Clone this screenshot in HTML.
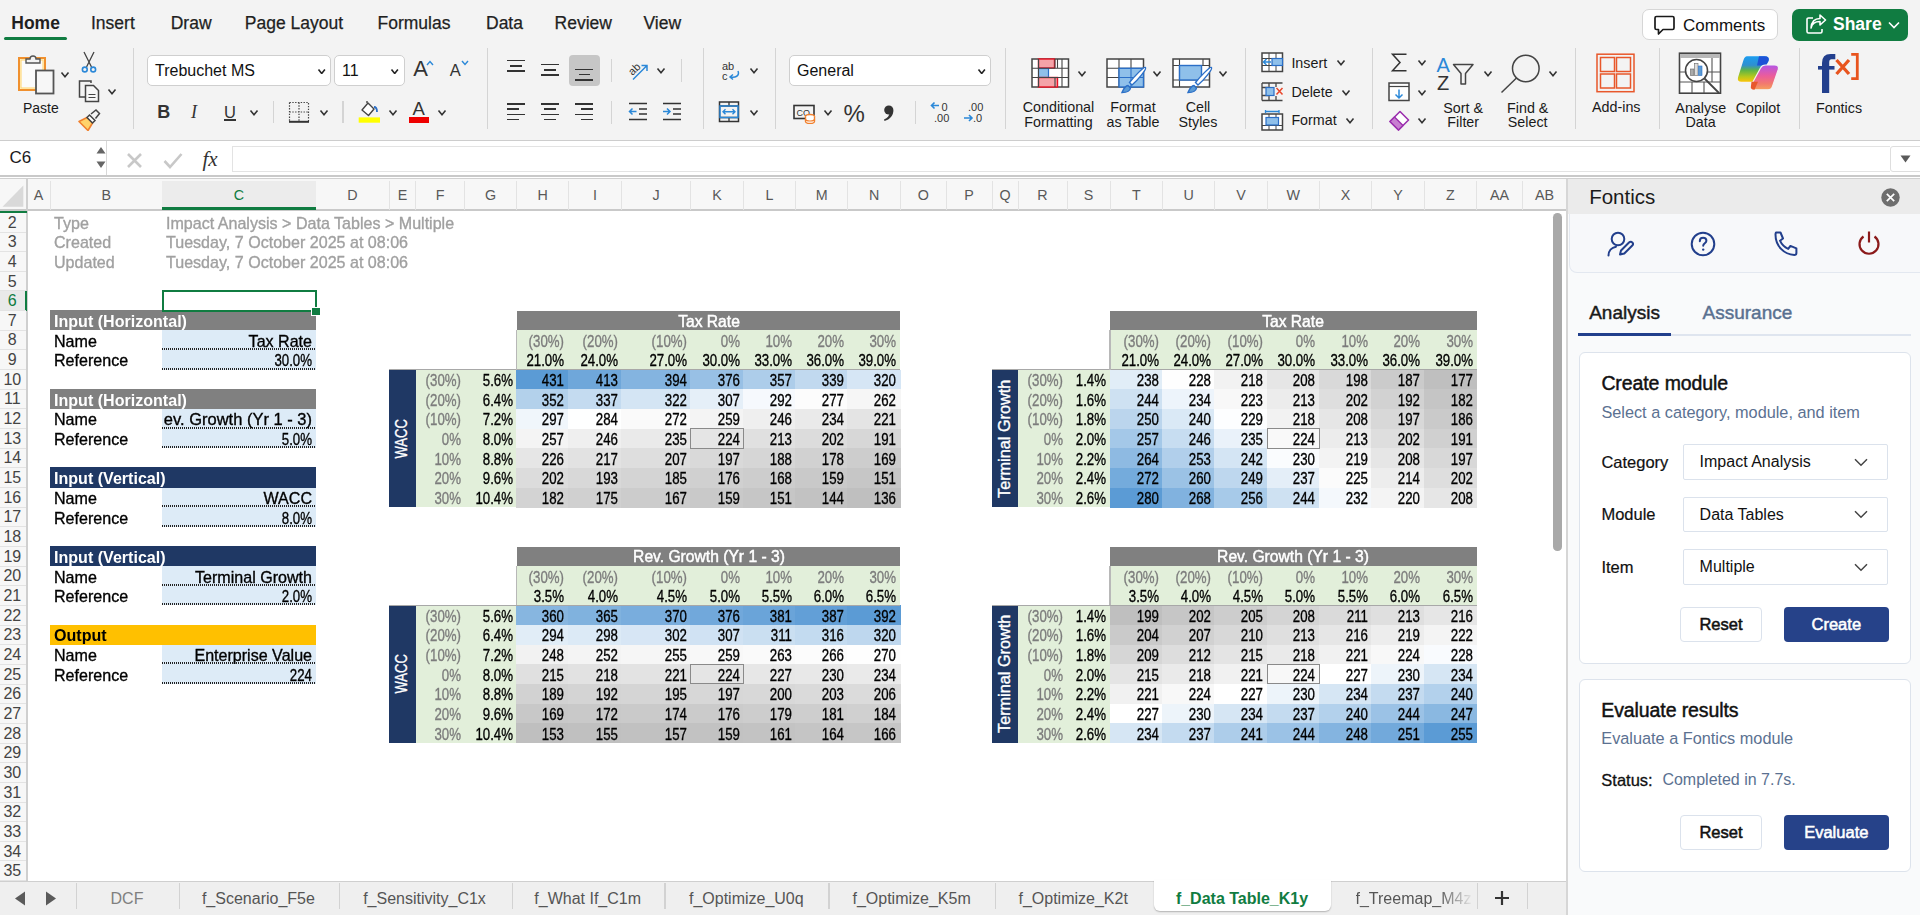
<!DOCTYPE html>
<html><head><meta charset="utf-8"><style>
html,body{margin:0;padding:0;width:1920px;height:915px;overflow:hidden;background:#fff;}
body{position:relative;font-family:"Liberation Sans", sans-serif;}
body>div,body>svg{position:absolute;}
.t{white-space:nowrap;}
</style></head><body>
<div style="left:0.00px;top:0.00px;width:1920.00px;height:140.00px;background:#f3f3f3"></div>
<div class="t" style="top:14.99px;font-size:17.5px;line-height:17.5px;color:#1f1f1f;font-weight:600;left:11.30px;">Home</div>
<div class="t" style="top:14.99px;font-size:17.5px;line-height:17.5px;color:#1f1f1f;font-weight:400;left:91.00px;-webkit-text-stroke-width:0.25px;">Insert</div>
<div class="t" style="top:14.99px;font-size:17.5px;line-height:17.5px;color:#1f1f1f;font-weight:400;left:170.70px;-webkit-text-stroke-width:0.25px;">Draw</div>
<div class="t" style="top:14.99px;font-size:17.5px;line-height:17.5px;color:#1f1f1f;font-weight:400;left:244.80px;-webkit-text-stroke-width:0.25px;">Page Layout</div>
<div class="t" style="top:14.99px;font-size:17.5px;line-height:17.5px;color:#1f1f1f;font-weight:400;left:377.50px;-webkit-text-stroke-width:0.25px;">Formulas</div>
<div class="t" style="top:14.99px;font-size:17.5px;line-height:17.5px;color:#1f1f1f;font-weight:400;left:486.00px;-webkit-text-stroke-width:0.25px;">Data</div>
<div class="t" style="top:14.99px;font-size:17.5px;line-height:17.5px;color:#1f1f1f;font-weight:400;left:554.60px;-webkit-text-stroke-width:0.25px;">Review</div>
<div class="t" style="top:14.99px;font-size:17.5px;line-height:17.5px;color:#1f1f1f;font-weight:400;left:643.50px;-webkit-text-stroke-width:0.25px;">View</div>
<div style="left:4.00px;top:36.50px;width:62.60px;height:3.50px;background:#107c41;border-radius:2px"></div>
<div style="left:1641.80px;top:9.40px;width:135.90px;height:30.20px;background:#fff;border:1px solid #d6d6d6;border-radius:7px;box-sizing:border-box"></div>
<svg style="left:1654px;top:15px" width="22" height="21" viewBox="0 0 22 21"><path d="M2.5 1.5h16a1.5 1.5 0 0 1 1.5 1.5v10a1.5 1.5 0 0 1-1.5 1.5H9l-4.5 4.5v-4.5h-2A1.5 1.5 0 0 1 1 13V3a1.5 1.5 0 0 1 1.5-1.5z" fill="none" stroke="#1a1a1a" stroke-width="1.7" stroke-linejoin="round"/></svg>
<div class="t" style="top:16.61px;font-size:17px;line-height:17px;color:#111;font-weight:400;left:1683.00px;">Comments</div>
<div style="left:1792.00px;top:9.00px;width:116.00px;height:31.50px;background:#107c41;border-radius:7px"></div>
<svg style="left:1805px;top:14px" width="22" height="21" viewBox="0 0 22 21"><path d="M8 4H3.5A1.5 1.5 0 0 0 2 5.5v12A1.5 1.5 0 0 0 3.5 19h12a1.5 1.5 0 0 0 1.5-1.5V15" fill="none" stroke="#fff" stroke-width="1.6"/><path d="M6 14c1-4.5 4-6.5 9-6.5V11l5.5-5L15 1v3.5C10 4.5 6.5 8 6 14z" fill="none" stroke="#fff" stroke-width="1.6" stroke-linejoin="round"/></svg>
<div class="t" style="top:16.19px;font-size:17.5px;line-height:17.5px;color:#fff;font-weight:600;left:1833.00px;">Share</div>
<svg style="left:1888px;top:21px" width="12" height="9" viewBox="0 0 12 9"><path d="M1 1.5l5 5 5-5" fill="none" stroke="#fff" stroke-width="1.6"/></svg>
<div style="left:133.00px;top:48.00px;width:1.20px;height:81.00px;background:#d4d4d4"></div>
<div style="left:486.60px;top:48.00px;width:1.20px;height:81.00px;background:#d4d4d4"></div>
<div style="left:702.60px;top:48.00px;width:1.20px;height:81.00px;background:#d4d4d4"></div>
<div style="left:774.75px;top:48.00px;width:1.20px;height:81.00px;background:#d4d4d4"></div>
<div style="left:1005.20px;top:48.00px;width:1.20px;height:81.00px;background:#d4d4d4"></div>
<div style="left:1245.00px;top:48.00px;width:1.20px;height:81.00px;background:#d4d4d4"></div>
<div style="left:1372.00px;top:48.00px;width:1.20px;height:81.00px;background:#d4d4d4"></div>
<div style="left:1575.00px;top:48.00px;width:1.20px;height:81.00px;background:#d4d4d4"></div>
<div style="left:1658.80px;top:48.00px;width:1.20px;height:81.00px;background:#d4d4d4"></div>
<div style="left:1798.80px;top:48.00px;width:1.20px;height:81.00px;background:#d4d4d4"></div>
<div style="left:272.80px;top:101.00px;width:1.20px;height:22.00px;background:#d4d4d4"></div>
<div style="left:342.40px;top:101.00px;width:1.20px;height:22.00px;background:#d4d4d4"></div>
<div style="left:611.00px;top:59.00px;width:1.20px;height:23.00px;background:#d4d4d4"></div>
<div style="left:680.50px;top:59.00px;width:1.20px;height:23.00px;background:#d4d4d4"></div>
<div style="left:611.00px;top:100.60px;width:1.20px;height:23.40px;background:#d4d4d4"></div>
<div style="left:914.75px;top:101.00px;width:1.20px;height:22.75px;background:#d4d4d4"></div>
<svg style="left:16px;top:52px" width="42" height="44" viewBox="0 0 42 44">
<rect x="3" y="6" width="26" height="32" fill="#fff4d6" stroke="#f0902e" stroke-width="2"/>
<rect x="5" y="8" width="22" height="28" fill="#fbfbfb" stroke="#ffd36b" stroke-width="1"/>
<path d="M10 11v-4h4a3 3 0 0 1 6 0h4v4z" fill="#f3f3f3" stroke="#555" stroke-width="1.4"/>
<rect x="20" y="18.5" width="17.5" height="23" fill="#f7f7f7" stroke="#555" stroke-width="1.8"/>
</svg>
<svg style="left:59.5px;top:70.5px" width="10" height="7" viewBox="-1 -1 10 7"><path d="M0.5 0.5L4.0 4.7L7.5 0.5" fill="none" stroke="#333" stroke-width="1.6"/></svg>
<div class="t" style="top:100.65px;font-size:14px;line-height:14px;color:#1a1a1a;font-weight:400;left:22.90px;">Paste</div>
<svg style="left:80px;top:51px" width="18" height="23" viewBox="0 0 18 23">
<path d="M4 1l7.5 15M14 1L6.5 16" stroke="#444" stroke-width="1.3" fill="none"/>
<circle cx="4.8" cy="18.5" r="2.4" fill="none" stroke="#2b88d8" stroke-width="1.6"/>
<circle cx="13.2" cy="18.5" r="2.4" fill="none" stroke="#2b88d8" stroke-width="1.6"/>
</svg>
<svg style="left:78px;top:80px" width="23" height="23" viewBox="0 0 23 23">
<path d="M13 3V1H1.5v16H7" fill="none" stroke="#444" stroke-width="1.5"/>
<path d="M7.5 5.5h8l5 5v11h-13z" fill="#f7f7f7" stroke="#444" stroke-width="1.5"/>
<path d="M10.5 14.5h7M10.5 17.5h7" stroke="#444" stroke-width="1.2"/>
</svg>
<svg style="left:106.5px;top:88.0px" width="10" height="7" viewBox="-1 -1 10 7"><path d="M0.5 0.5L4.0 4.7L7.5 0.5" fill="none" stroke="#333" stroke-width="1.6"/></svg>
<svg style="left:78px;top:109px" width="23" height="22" viewBox="0 0 23 22">
<path d="M1 12.5l8-4 5.5 5.5-4.5 7.5z" fill="#ffd36b" stroke="#f0802e" stroke-width="1.6" stroke-linejoin="round"/>
<path d="M9 8.5l2.5-2.5 5.5 5.5-2.5 2.5z" fill="#fff" stroke="#444" stroke-width="1.5"/>
<path d="M13 5l5-4 3.5 3.5-4 5" fill="none" stroke="#444" stroke-width="1.5"/>
</svg>
<div style="left:147.00px;top:55.00px;width:184.00px;height:30.70px;background:#fff;border:1px solid #cfcfcf;border-radius:5px;box-sizing:border-box"></div>
<div class="t" style="top:62.86px;font-size:16px;line-height:16px;color:#111;font-weight:400;left:155.00px;">Trebuchet MS</div>
<svg style="left:316.6px;top:67.5px" width="9.4" height="6.8" viewBox="-1 -1 9.4 6.8"><path d="M0.5 0.5L3.7 4.5L6.9 0.5" fill="none" stroke="#222" stroke-width="1.6"/></svg>
<div style="left:334.30px;top:55.00px;width:70.40px;height:30.70px;background:#fff;border:1px solid #cfcfcf;border-radius:5px;box-sizing:border-box"></div>
<div class="t" style="top:62.86px;font-size:16px;line-height:16px;color:#111;font-weight:400;left:342.00px;">11</div>
<svg style="left:390.0px;top:67.5px" width="9.4" height="6.8" viewBox="-1 -1 9.4 6.8"><path d="M0.5 0.5L3.7 4.5L6.9 0.5" fill="none" stroke="#222" stroke-width="1.6"/></svg>
<div class="t" style="top:57.68px;font-size:22px;line-height:22px;color:#333;font-weight:400;left:413.20px;font-weight:300;">A</div>
<svg style="left:426px;top:60px" width="8" height="6" viewBox="0 0 8 6"><path d="M1 5l3-3.5L7 5" stroke="#2b88d8" stroke-width="1.4" fill="none"/></svg>
<div class="t" style="top:62.33px;font-size:16.5px;line-height:16.5px;color:#333;font-weight:400;left:449.80px;">A</div>
<svg style="left:460.5px;top:60px" width="8" height="6" viewBox="0 0 8 6"><path d="M1 1l3 3.5L7 1" stroke="#2b88d8" stroke-width="1.4" fill="none"/></svg>
<div class="t" style="top:102.56px;font-size:18px;line-height:18px;color:#333;font-weight:700;left:157.20px;">B</div>
<div class="t" style="top:102.56px;font-size:18px;line-height:18px;color:#333;font-weight:400;left:191.00px;font-style:italic;font-family:Liberation Serif,serif;">I</div>
<div class="t" style="top:103.83px;font-size:16.5px;line-height:16.5px;color:#333;font-weight:400;left:224.00px;">U</div>
<div style="left:224.00px;top:119.30px;width:11.60px;height:1.40px;background:#333"></div>
<svg style="left:248.8px;top:109.0px" width="10" height="7" viewBox="-1 -1 10 7"><path d="M0.5 0.5L4.0 4.7L7.5 0.5" fill="none" stroke="#333" stroke-width="1.6"/></svg>
<svg style="left:288px;top:101px" width="22" height="22" viewBox="0 0 22 22">
<path d="M1.5 1.5h19v19M1.5 1.5v19M11 1.5v19M1.5 11h19" fill="none" stroke="#444" stroke-width="1.2" stroke-dasharray="1.4 1.4"/>
<path d="M1 20.8h20" stroke="#333" stroke-width="2"/>
</svg>
<svg style="left:318.7px;top:109.0px" width="10" height="7" viewBox="-1 -1 10 7"><path d="M0.5 0.5L4.0 4.7L7.5 0.5" fill="none" stroke="#333" stroke-width="1.6"/></svg>
<svg style="left:358px;top:100px" width="23" height="24" viewBox="0 0 23 24">
<path d="M4 10l6-7 6 6-5.5 6.5z" fill="#fff" stroke="#444" stroke-width="1.4" stroke-linejoin="round"/>
<path d="M9 3V1" stroke="#444" stroke-width="1.4"/>
<path d="M16 7c2 0 3 2 3 5" fill="none" stroke="#2b6fc7" stroke-width="1.8"/>
<rect x="0.7" y="17.4" width="21.3" height="5.3" fill="#ffff00"/>
</svg>
<svg style="left:387.8px;top:109.0px" width="10" height="7" viewBox="-1 -1 10 7"><path d="M0.5 0.5L4.0 4.7L7.5 0.5" fill="none" stroke="#333" stroke-width="1.6"/></svg>
<div class="t" style="top:100.34px;font-size:18.5px;line-height:18.5px;color:#333;font-weight:400;left:412.50px;font-weight:300;">A</div>
<div style="left:408.60px;top:117.40px;width:20.90px;height:5.30px;background:#ee0000"></div>
<svg style="left:437.4px;top:109.0px" width="10" height="7" viewBox="-1 -1 10 7"><path d="M0.5 0.5L4.0 4.7L7.5 0.5" fill="none" stroke="#333" stroke-width="1.6"/></svg>
<div style="left:506.80px;top:59.95px;width:18.40px;height:1.50px;background:#333"></div>
<div style="left:510.48px;top:65.05px;width:11.04px;height:1.50px;background:#333"></div>
<div style="left:506.80px;top:70.25px;width:18.40px;height:1.50px;background:#333"></div>
<div style="left:540.80px;top:63.75px;width:18.40px;height:1.50px;background:#333"></div>
<div style="left:544.48px;top:69.15px;width:11.04px;height:1.50px;background:#333"></div>
<div style="left:540.80px;top:74.25px;width:18.40px;height:1.50px;background:#333"></div>
<div style="left:568.50px;top:55.00px;width:31.20px;height:30.70px;background:#c6c6c6;border-radius:4px"></div>
<div style="left:575.00px;top:68.85px;width:18.40px;height:1.50px;background:#333"></div>
<div style="left:578.68px;top:73.95px;width:11.04px;height:1.50px;background:#333"></div>
<div style="left:575.00px;top:79.15px;width:18.40px;height:1.50px;background:#333"></div>
<div style="left:506.80px;top:103.05px;width:18.40px;height:1.50px;background:#333"></div>
<div style="left:506.80px;top:108.25px;width:11.96px;height:1.50px;background:#333"></div>
<div style="left:506.80px;top:113.55px;width:18.40px;height:1.50px;background:#333"></div>
<div style="left:506.80px;top:118.75px;width:11.96px;height:1.50px;background:#333"></div>
<div style="left:540.80px;top:103.05px;width:18.40px;height:1.50px;background:#333"></div>
<div style="left:544.02px;top:108.25px;width:11.96px;height:1.50px;background:#333"></div>
<div style="left:540.80px;top:113.55px;width:18.40px;height:1.50px;background:#333"></div>
<div style="left:544.02px;top:118.75px;width:11.96px;height:1.50px;background:#333"></div>
<div style="left:575.00px;top:103.05px;width:18.40px;height:1.50px;background:#333"></div>
<div style="left:581.44px;top:108.25px;width:11.96px;height:1.50px;background:#333"></div>
<div style="left:575.00px;top:113.55px;width:18.40px;height:1.50px;background:#333"></div>
<div style="left:581.44px;top:118.75px;width:11.96px;height:1.50px;background:#333"></div>
<svg style="left:626px;top:59px" width="24" height="22" viewBox="0 0 24 22">
<text x="2" y="14" font-family="Liberation Sans" font-size="11" fill="#333" transform="rotate(-45 8 10)">ab</text>
<path d="M7 20.5L21 6.5M15.5 6.5H21V12" fill="none" stroke="#2b88d8" stroke-width="1.5"/>
</svg>
<svg style="left:656.4px;top:67.0px" width="10" height="7" viewBox="-1 -1 10 7"><path d="M0.5 0.5L4.0 4.7L7.5 0.5" fill="none" stroke="#333" stroke-width="1.6"/></svg>
<svg style="left:628px;top:102px" width="20" height="20" viewBox="0 0 20 20">
<path d="M1 1.5h18M11 7h8M11 12h8M1 17.5h18" stroke="#333" stroke-width="1.5"/>
<path d="M8.5 9.5H1.5M4.5 6.5l-3 3 3 3" fill="none" stroke="#2b88d8" stroke-width="1.5"/>
</svg>
<svg style="left:662px;top:102px" width="20" height="20" viewBox="0 0 20 20">
<path d="M1 1.5h18M11 7h8M11 12h8M1 17.5h18" stroke="#333" stroke-width="1.5"/>
<path d="M1 9.5h7M5 6.5l3 3-3 3" fill="none" stroke="#2b88d8" stroke-width="1.5"/>
</svg>
<svg style="left:720px;top:60px" width="22" height="22" viewBox="0 0 22 22">
<text x="2" y="10" font-family="Liberation Sans" font-size="11" fill="#333">ab</text>
<text x="2" y="20" font-family="Liberation Sans" font-size="11" fill="#333">c</text>
<path d="M18 11c2 5-3 7-7.5 6M13 14.5l-3 2.5 3 2.5" fill="none" stroke="#2b88d8" stroke-width="1.5"/>
</svg>
<svg style="left:748.5px;top:67.0px" width="10" height="7" viewBox="-1 -1 10 7"><path d="M0.5 0.5L4.0 4.7L7.5 0.5" fill="none" stroke="#333" stroke-width="1.6"/></svg>
<svg style="left:718px;top:101px" width="22" height="22" viewBox="0 0 22 22">
<rect x="1.5" y="1" width="19" height="19.5" fill="none" stroke="#333" stroke-width="1.5"/>
<path d="M1.5 5h19M1.5 16.5h19M11 1v4M11 16.5v4" stroke="#333" stroke-width="1.3"/>
<rect x="2" y="5" width="18" height="11.5" fill="none" stroke="#2b88d8" stroke-width="1.5"/>
<path d="M5 10.8h12M7.5 8.3L5 10.8l2.5 2.5M14.5 8.3l2.5 2.5-2.5 2.5" fill="none" stroke="#2b88d8" stroke-width="1.4"/>
</svg>
<svg style="left:749.0px;top:109.0px" width="10" height="7" viewBox="-1 -1 10 7"><path d="M0.5 0.5L4.0 4.7L7.5 0.5" fill="none" stroke="#333" stroke-width="1.6"/></svg>
<div style="left:788.50px;top:55.00px;width:202.50px;height:30.70px;background:#fff;border:1px solid #cfcfcf;border-radius:5px;box-sizing:border-box"></div>
<div class="t" style="top:62.86px;font-size:16px;line-height:16px;color:#111;font-weight:400;left:797.00px;">General</div>
<svg style="left:976.5px;top:67.5px" width="9.4" height="6.8" viewBox="-1 -1 9.4 6.8"><path d="M0.5 0.5L3.7 4.5L6.9 0.5" fill="none" stroke="#222" stroke-width="1.6"/></svg>
<svg style="left:793px;top:104px" width="24" height="20" viewBox="0 0 24 20">
<rect x="1" y="1.5" width="20" height="13" fill="none" stroke="#333" stroke-width="1.6"/>
<text x="3.5" y="12" font-family="Liberation Sans" font-size="9" fill="#333">CO</text>
<ellipse cx="17" cy="12.5" rx="4.5" ry="2" fill="#fff" stroke="#f0802e" stroke-width="1.4"/>
<path d="M12.5 12.5v5c0 1 2 2 4.5 2s4.5-1 4.5-2v-5" fill="#fff" stroke="#f0802e" stroke-width="1.4"/>
<path d="M12.5 15c0 1 2 2 4.5 2s4.5-1 4.5-2" fill="none" stroke="#f0802e" stroke-width="1.2"/>
</svg>
<svg style="left:822.8px;top:109.0px" width="10" height="7" viewBox="-1 -1 10 7"><path d="M0.5 0.5L4.0 4.7L7.5 0.5" fill="none" stroke="#333" stroke-width="1.6"/></svg>
<div class="t" style="top:101.58px;font-size:24px;line-height:24px;color:#333;font-weight:400;left:843.50px;font-weight:300;">%</div>
<svg style="left:882px;top:104px" width="13" height="18" viewBox="0 0 13 18"><circle cx="6.8" cy="6" r="4.6" fill="#333"/><path d="M11.3 6.5C11.5 11.5 8 15.5 2.5 17L2 15.5C5.5 14 7.5 11.5 7.5 9z" fill="#333"/></svg>
<svg style="left:929px;top:100px" width="24" height="24" viewBox="0 0 24 24">
<path d="M10 5.5H2.5M5.5 2.5l-3 3 3 3" fill="none" stroke="#2b88d8" stroke-width="1.6"/>
<text x="12.5" y="11" font-family="Liberation Sans" font-size="11" fill="#333">0</text>
<text x="5" y="22" font-family="Liberation Sans" font-size="11" fill="#333">.00</text>
</svg>
<svg style="left:963px;top:100px" width="24" height="24" viewBox="0 0 24 24">
<text x="5" y="11" font-family="Liberation Sans" font-size="11" fill="#333">.00</text>
<path d="M1 18h8M6 15l3 3-3 3" fill="none" stroke="#2b88d8" stroke-width="1.6"/>
<text x="10" y="22" font-family="Liberation Sans" font-size="11" fill="#333">.0</text>
</svg>
<svg style="left:1031px;top:58px" width="39" height="31" viewBox="0 0 39 31">
<rect x="1" y="1" width="36.5" height="28" fill="#fff" stroke="#444" stroke-width="1.5"/>
<rect x="7.5" y="1" width="16" height="9" fill="#f4a3a8" stroke="#e81123" stroke-width="1.4"/>
<rect x="7.5" y="10.5" width="10" height="9" fill="#8fc0ea" stroke="#2b6fc7" stroke-width="1.2"/>
<rect x="7.5" y="19.5" width="19" height="9.5" fill="#f4a3a8" stroke="#e81123" stroke-width="1.4"/>
<path d="M1 10.3h36.5M1 19.5h36.5M7.5 1v28M31 1v28M24 1v9M24 19.5v9.5M26.5 1v9" stroke="#444" stroke-width="1.1" fill="none"/>
</svg>
<svg style="left:1076.9px;top:70.0px" width="10" height="7" viewBox="-1 -1 10 7"><path d="M0.5 0.5L4.0 4.7L7.5 0.5" fill="none" stroke="#333" stroke-width="1.6"/></svg>
<div class="t" style="top:100.20px;font-size:14.3px;line-height:14.3px;color:#1a1a1a;font-weight:400;left:608.50px;width:900px;text-align:center;">Conditional</div>
<div class="t" style="top:115.10px;font-size:14.3px;line-height:14.3px;color:#1a1a1a;font-weight:400;left:608.50px;width:900px;text-align:center;">Formatting</div>
<svg style="left:1106px;top:58px" width="42" height="37" viewBox="0 0 42 37">
<rect x="1" y="1" width="36.5" height="28" fill="#fff" stroke="#444" stroke-width="1.5"/>
<path d="M1 10.3h36.5M1 19.5h36.5M13 1v28M25 1v28" stroke="#444" stroke-width="1.1"/>
<rect x="13" y="10.3" width="24.5" height="18.7" fill="#8fc0ea" stroke="#2b6fc7" stroke-width="1.4"/>
<path d="M25 10.3v18.7M13 19.5h24.5" stroke="#2b6fc7" stroke-width="1.1"/>
<path d="M39.5 9.5c1.5 1.5-8 13-13.5 17.5l-2.5-2.5C28 19 38 8 39.5 9.5z" fill="#fff" stroke="#2b6fc7" stroke-width="1.4"/>
<path d="M16 34.5c3 0 8-1 8.5-4.5l-2.5-2.5c-3.5 0.5-4.5 4-6 7z" fill="#5b9bd5" stroke="#2b6fc7" stroke-width="1.4"/>
</svg>
<svg style="left:1152.0px;top:70.0px" width="10" height="7" viewBox="-1 -1 10 7"><path d="M0.5 0.5L4.0 4.7L7.5 0.5" fill="none" stroke="#333" stroke-width="1.6"/></svg>
<div class="t" style="top:100.20px;font-size:14.3px;line-height:14.3px;color:#1a1a1a;font-weight:400;left:683.00px;width:900px;text-align:center;">Format</div>
<div class="t" style="top:115.10px;font-size:14.3px;line-height:14.3px;color:#1a1a1a;font-weight:400;left:683.00px;width:900px;text-align:center;">as Table</div>
<svg style="left:1172px;top:58px" width="42" height="37" viewBox="0 0 42 37">
<rect x="1" y="1" width="36.5" height="28" fill="#fff" stroke="#444" stroke-width="1.5"/>
<path d="M1 7.5h36.5M1 22h36.5M7.5 1v28M31 1v6.5" stroke="#444" stroke-width="1.1"/>
<rect x="7.5" y="7.5" width="22" height="14.5" fill="#8fc0ea" stroke="#2b6fc7" stroke-width="1.4"/>
<path d="M39.5 9.5c1.5 1.5-8 13-13.5 17.5l-2.5-2.5C28 19 38 8 39.5 9.5z" fill="#fff" stroke="#2b6fc7" stroke-width="1.4"/>
<path d="M16 34.5c3 0 8-1 8.5-4.5l-2.5-2.5c-3.5 0.5-4.5 4-6 7z" fill="#5b9bd5" stroke="#2b6fc7" stroke-width="1.4"/>
</svg>
<svg style="left:1217.8px;top:70.0px" width="10" height="7" viewBox="-1 -1 10 7"><path d="M0.5 0.5L4.0 4.7L7.5 0.5" fill="none" stroke="#333" stroke-width="1.6"/></svg>
<div class="t" style="top:100.20px;font-size:14.3px;line-height:14.3px;color:#1a1a1a;font-weight:400;left:748.00px;width:900px;text-align:center;">Cell</div>
<div class="t" style="top:115.10px;font-size:14.3px;line-height:14.3px;color:#1a1a1a;font-weight:400;left:748.00px;width:900px;text-align:center;">Styles</div>
<svg style="left:1261px;top:52px" width="23" height="21" viewBox="0 0 23 21">
<rect x="1" y="1" width="20.5" height="18.5" fill="#fff" stroke="#444" stroke-width="1.5"/>
<path d="M1 6.5h20.5M1 13.5h20.5M8 1v18.5M15 1v18.5" stroke="#444" stroke-width="1"/>
<rect x="11" y="6.5" width="10.5" height="7" fill="#8fc0ea" stroke="#2b6fc7" stroke-width="1.2"/>
<path d="M10 10H2.5M5.5 7l-3 3 3 3" fill="none" stroke="#2b88d8" stroke-width="1.5"/>
</svg>
<div class="t" style="top:56.10px;font-size:14.3px;line-height:14.3px;color:#1a1a1a;font-weight:400;left:1291.40px;">Insert</div>
<svg style="left:1335.5px;top:59.4px" width="10" height="7" viewBox="-1 -1 10 7"><path d="M0.5 0.5L4.0 4.7L7.5 0.5" fill="none" stroke="#333" stroke-width="1.6"/></svg>
<svg style="left:1261px;top:82px" width="23" height="20" viewBox="0 0 23 20">
<path d="M1 1h20.5M1 18.5h20.5M1 1v17.5M8 1v4M15 1v4M8 14v4.5M15 14v4.5M1 5.5h6M1 13.5h6" fill="none" stroke="#444" stroke-width="1.3"/>
<rect x="5" y="5.5" width="8" height="8" fill="#8fc0ea" stroke="#2b6fc7" stroke-width="1.2"/>
<path d="M15.5 6l6 6.5M21.5 6l-6 6.5" stroke="#e8462a" stroke-width="1.5"/>
</svg>
<div class="t" style="top:84.90px;font-size:14.3px;line-height:14.3px;color:#1a1a1a;font-weight:400;left:1291.40px;">Delete</div>
<svg style="left:1341.0px;top:88.6px" width="10" height="7" viewBox="-1 -1 10 7"><path d="M0.5 0.5L4.0 4.7L7.5 0.5" fill="none" stroke="#333" stroke-width="1.6"/></svg>
<svg style="left:1261px;top:110px" width="23" height="21" viewBox="0 0 23 21">
<rect x="1" y="4" width="20.5" height="16" fill="#fff" stroke="#444" stroke-width="1.5"/>
<path d="M1 15.5h20.5M8 4v16M15 4v16" stroke="#444" stroke-width="1"/>
<rect x="5" y="7.5" width="12.5" height="7.5" fill="#8fc0ea" stroke="#2b6fc7" stroke-width="1.2"/>
<path d="M4.5 1.5h13.5M4.5 0v3M18 0v3" stroke="#2b88d8" stroke-width="1.3"/>
</svg>
<div class="t" style="top:113.40px;font-size:14.3px;line-height:14.3px;color:#1a1a1a;font-weight:400;left:1291.40px;">Format</div>
<svg style="left:1345.0px;top:117.4px" width="10" height="7" viewBox="-1 -1 10 7"><path d="M0.5 0.5L4.0 4.7L7.5 0.5" fill="none" stroke="#333" stroke-width="1.6"/></svg>
<svg style="left:1390px;top:52px" width="19" height="21" viewBox="0 0 19 21"><path d="M16.5 2.2H2.5L10 10.5 2.5 18.8H16.5" fill="none" stroke="#333" stroke-width="1.5" stroke-linejoin="miter"/></svg>
<svg style="left:1417.0px;top:59.4px" width="10" height="7" viewBox="-1 -1 10 7"><path d="M0.5 0.5L4.0 4.7L7.5 0.5" fill="none" stroke="#333" stroke-width="1.6"/></svg>
<svg style="left:1388px;top:82px" width="22" height="20" viewBox="0 0 22 20">
<rect x="1" y="1" width="20" height="17.5" fill="#fff" stroke="#444" stroke-width="1.5"/>
<path d="M1 4.5h20" stroke="#444" stroke-width="1.2"/>
<path d="M11 7.5v8M7.5 12.5l3.5 3.5 3.5-3.5" fill="none" stroke="#2b88d8" stroke-width="1.5"/>
</svg>
<svg style="left:1417.0px;top:88.6px" width="10" height="7" viewBox="-1 -1 10 7"><path d="M0.5 0.5L4.0 4.7L7.5 0.5" fill="none" stroke="#333" stroke-width="1.6"/></svg>
<svg style="left:1388px;top:110px" width="22" height="21" viewBox="0 0 22 21">
<path d="M12 1.5l8.5 8.5-10 10-8.5-8.5z" fill="#fff" stroke="#9b2fae" stroke-width="1.6" stroke-linejoin="round"/>
<path d="M2 11.5l4.5-4.5 8.5 8.5-4.5 4.5z" fill="#c87fd1" stroke="#9b2fae" stroke-width="1.4" stroke-linejoin="round"/>
</svg>
<svg style="left:1417.0px;top:117.4px" width="10" height="7" viewBox="-1 -1 10 7"><path d="M0.5 0.5L4.0 4.7L7.5 0.5" fill="none" stroke="#333" stroke-width="1.6"/></svg>
<div class="t" style="top:54.57px;font-size:20px;line-height:20px;color:#2b88d8;font-weight:400;left:1436.50px;font-weight:300;">A</div>
<div class="t" style="top:73.07px;font-size:20px;line-height:20px;color:#333;font-weight:400;left:1437.00px;font-weight:300;">Z</div>
<svg style="left:1452px;top:63px" width="23" height="23" viewBox="0 0 23 23"><path d="M1.5 1.5h19.5l-7.5 9v10.5h-4.5V10.5z" fill="none" stroke="#444" stroke-width="1.5" stroke-linejoin="round"/></svg>
<svg style="left:1482.5px;top:70.0px" width="10" height="7" viewBox="-1 -1 10 7"><path d="M0.5 0.5L4.0 4.7L7.5 0.5" fill="none" stroke="#333" stroke-width="1.6"/></svg>
<div class="t" style="top:100.50px;font-size:14.3px;line-height:14.3px;color:#1a1a1a;font-weight:400;left:1013.20px;width:900px;text-align:center;">Sort &amp;</div>
<div class="t" style="top:115.40px;font-size:14.3px;line-height:14.3px;color:#1a1a1a;font-weight:400;left:1013.20px;width:900px;text-align:center;">Filter</div>
<svg style="left:1500px;top:54px" width="41" height="40" viewBox="0 0 41 40"><circle cx="25.8" cy="14.5" r="13.3" fill="none" stroke="#444" stroke-width="1.5"/><path d="M16.5 24L1.5 38.5" stroke="#444" stroke-width="1.5"/></svg>
<svg style="left:1548.0px;top:70.0px" width="10" height="7" viewBox="-1 -1 10 7"><path d="M0.5 0.5L4.0 4.7L7.5 0.5" fill="none" stroke="#333" stroke-width="1.6"/></svg>
<div class="t" style="top:100.50px;font-size:14.3px;line-height:14.3px;color:#1a1a1a;font-weight:400;left:1077.70px;width:900px;text-align:center;">Find &amp;</div>
<div class="t" style="top:115.40px;font-size:14.3px;line-height:14.3px;color:#1a1a1a;font-weight:400;left:1077.70px;width:900px;text-align:center;">Select</div>
<svg style="left:1596px;top:53px" width="40" height="40" viewBox="0 0 40 40">
<rect x="1" y="1.2" width="37" height="37.5" fill="none" stroke="#e8572a" stroke-width="1.5"/>
<rect x="4.5" y="4.5" width="14" height="14" fill="none" stroke="#e8572a" stroke-width="1.5"/>
<rect x="20.5" y="4.5" width="14" height="14" fill="none" stroke="#e8572a" stroke-width="1.5"/>
<rect x="4.5" y="21" width="14" height="14" fill="none" stroke="#e8572a" stroke-width="1.5"/>
<rect x="20.5" y="21" width="14" height="14" fill="none" stroke="#e8572a" stroke-width="1.5"/>
</svg>
<div class="t" style="top:100.40px;font-size:14.3px;line-height:14.3px;color:#1a1a1a;font-weight:400;left:1166.30px;width:900px;text-align:center;">Add-ins</div>
<svg style="left:1678px;top:52px" width="45" height="43" viewBox="0 0 45 43">
<rect x="1.5" y="1.2" width="41" height="40" fill="#fff" stroke="#444" stroke-width="1.6"/>
<rect x="2" y="2" width="40" height="4" fill="#b8b8b8"/>
<path d="M2 20h40M2 30h40M14 30v11M26 30v11M34 6v24" stroke="#555" stroke-width="1.1"/>
<circle cx="18.5" cy="18.5" r="11" fill="#fff" stroke="#444" stroke-width="1.6"/>
<path d="M26.5 26.5L41 41" stroke="#444" stroke-width="1.8"/>
<rect x="12.5" y="17" width="3.5" height="6.5" fill="#aaa" stroke="#666" stroke-width=".6"/>
<rect x="16.5" y="11.5" width="3.5" height="12" fill="#ddd" stroke="#666" stroke-width=".6"/>
<rect x="20.5" y="14" width="3.5" height="9.5" fill="#5b9bd5" stroke="#2b6fc7" stroke-width=".6"/>
</svg>
<div class="t" style="top:100.50px;font-size:14.3px;line-height:14.3px;color:#1a1a1a;font-weight:400;left:1250.80px;width:900px;text-align:center;">Analyse</div>
<div class="t" style="top:115.40px;font-size:14.3px;line-height:14.3px;color:#1a1a1a;font-weight:400;left:1250.50px;width:900px;text-align:center;">Data</div>
<svg style="left:1736px;top:54px" width="46" height="40" viewBox="0 0 46 40">
<defs>
<linearGradient id="cpa" x1="0" y1="0" x2="0" y2="1"><stop offset="0" stop-color="#1b9df0"/><stop offset=".35" stop-color="#2f8fd0"/><stop offset=".55" stop-color="#5fb446"/><stop offset=".8" stop-color="#b6c81c"/><stop offset="1" stop-color="#fcc40a"/></linearGradient>
<linearGradient id="cpb" x1="0" y1="0" x2="0" y2="1"><stop offset="0" stop-color="#b455e6"/><stop offset=".45" stop-color="#ec5d9a"/><stop offset=".75" stop-color="#f27a6e"/><stop offset="1" stop-color="#f6a25c"/></linearGradient>
</defs>
<path d="M11 2.3H28.5Q34 2.3 32.5 7L22.5 25Q21 27.8 17.5 27.8H5.5Q1 27.8 2 23.5L7.5 6Q8.8 2.3 11 2.3z" fill="url(#cpa)"/>
<path d="M23 2.3H28.5Q34 2.3 32.5 7L30 11.5H21z" fill="#1d52d6"/>
<path d="M29.5 11H38.5Q43.5 11 42.3 15.5L36.5 32.5Q35.5 35.8 32 35.8H18.5Q13.5 35.8 15 31.5L24.5 14Q26 11 29.5 11z" fill="url(#cpb)" stroke="#f3f3f3" stroke-width="1.2"/>
<path d="M15.5 27.8H22L18.5 35.8Q14 35.8 15 31.5z" fill="#e8592c"/>
</svg>
<div class="t" style="top:100.50px;font-size:14.3px;line-height:14.3px;color:#1a1a1a;font-weight:400;left:1308.00px;width:900px;text-align:center;">Copilot</div>
<svg style="left:1815px;top:50px" width="48" height="46" viewBox="0 0 48 46">
<rect x="7" y="16" width="7.2" height="27" fill="#233f8d"/>
<rect x="3" y="16" width="16.5" height="3.6" fill="#233f8d"/>
<path d="M7 16.5V13Q7 4 15.5 4H20.3V9.3H16.5Q14.2 9.3 14.2 12.5V16.5z" fill="#233f8d"/>
<path d="M21.5 10l12.5 14M34 10L21.5 24" stroke="#e8541e" stroke-width="3.3"/>
<path d="M36.2 4.4H42.3V28.6H36.2" fill="none" stroke="#e8541e" stroke-width="2.8"/>
</svg>
<div class="t" style="top:100.50px;font-size:14.3px;line-height:14.3px;color:#1a1a1a;font-weight:400;left:1389.00px;width:900px;text-align:center;">Fontics</div>
<div style="left:0.00px;top:139.50px;width:1920.00px;height:1.80px;background:#cdcdcd"></div>
<div style="left:0.00px;top:141.00px;width:1920.00px;height:34.50px;background:#fff"></div>
<div style="left:106.00px;top:141.00px;width:1.20px;height:34.50px;background:#d8d8d8"></div>
<div class="t" style="top:149.01px;font-size:17px;line-height:17px;color:#1a1a1a;font-weight:400;left:9.50px;">C6</div>
<svg style="left:96px;top:146px" width="10" height="24" viewBox="0 0 10 24"><path d="M0.5 7.5L5 1l4.5 6.5z M0.5 15.5L5 22l4.5-6.5z" fill="#666"/></svg>
<svg style="left:126px;top:152px" width="17" height="17" viewBox="0 0 17 17"><path d="M2 2l13 13M15 2L2 15" stroke="#c8c8c8" stroke-width="2.6"/></svg>
<svg style="left:163px;top:152px" width="20" height="17" viewBox="0 0 20 17"><path d="M1.5 9l5.5 6L18.5 2" fill="none" stroke="#c8c8c8" stroke-width="2.6"/></svg>
<div class="t" style="top:148.72px;font-size:21px;line-height:21px;color:#333;font-weight:400;left:202.50px;font-family:Liberation Serif,serif;font-style:italic;">fx</div>
<div style="left:232.20px;top:146.00px;width:1658.00px;height:25.50px;background:#fff;border:1px solid #e3e3e3;border-right:none;box-sizing:border-box"></div>
<div style="left:1890.30px;top:146.00px;width:35.00px;height:25.50px;background:#fff;border:1px solid #dedede;border-radius:3px;box-sizing:border-box"></div>
<svg style="left:1900px;top:155px" width="11" height="8" viewBox="0 0 11 8"><path d="M0.5 0.5h10L5.5 7.5z" fill="#5a5a5a"/></svg>
<div style="left:0.00px;top:175.00px;width:1920.00px;height:1.60px;background:#c9c9c9"></div>
<div style="left:0.00px;top:176.60px;width:1920.00px;height:1.20px;background:#fff"></div>
<div style="left:0.00px;top:177.80px;width:1920.00px;height:1.30px;background:#d0d0d0"></div>
<div style="left:0.00px;top:179.00px;width:1566.70px;height:31.00px;background:#f7f7f7"></div>
<div style="left:0.00px;top:209.30px;width:1566.70px;height:1.80px;background:#c9c9c9"></div>
<svg style="left:2px;top:185px" width="22" height="22" viewBox="0 0 22 22"><path d="M21.3 0.5V21.7H0.5z" fill="#d9d9d9"/></svg>
<div style="left:26.00px;top:179.00px;width:1.60px;height:702.00px;background:#cfcfcf"></div>
<div class="t" style="top:188.10px;font-size:14.3px;line-height:14.3px;color:#595959;font-weight:400;left:-411.40px;width:900px;text-align:center;">A</div>
<div style="left:49.70px;top:181.00px;width:1.00px;height:28.50px;background:#e3e3e3"></div>
<div class="t" style="top:188.10px;font-size:14.3px;line-height:14.3px;color:#595959;font-weight:400;left:-343.85px;width:900px;text-align:center;">B</div>
<div style="left:161.60px;top:181.00px;width:1.00px;height:28.50px;background:#e3e3e3"></div>
<div class="t" style="top:188.10px;font-size:14.3px;line-height:14.3px;color:#107c41;font-weight:400;left:-211.10px;width:900px;text-align:center;">C</div>
<div style="left:315.20px;top:181.00px;width:1.00px;height:28.50px;background:#e3e3e3"></div>
<div class="t" style="top:188.10px;font-size:14.3px;line-height:14.3px;color:#595959;font-weight:400;left:-97.55px;width:900px;text-align:center;">D</div>
<div style="left:388.70px;top:181.00px;width:1.00px;height:28.50px;background:#e3e3e3"></div>
<div class="t" style="top:188.10px;font-size:14.3px;line-height:14.3px;color:#595959;font-weight:400;left:-47.60px;width:900px;text-align:center;">E</div>
<div style="left:415.10px;top:181.00px;width:1.00px;height:28.50px;background:#e3e3e3"></div>
<div class="t" style="top:188.10px;font-size:14.3px;line-height:14.3px;color:#595959;font-weight:400;left:-9.90px;width:900px;text-align:center;">F</div>
<div style="left:464.10px;top:181.00px;width:1.00px;height:28.50px;background:#e3e3e3"></div>
<div class="t" style="top:188.10px;font-size:14.3px;line-height:14.3px;color:#595959;font-weight:400;left:40.65px;width:900px;text-align:center;">G</div>
<div style="left:516.20px;top:181.00px;width:1.00px;height:28.50px;background:#e3e3e3"></div>
<div class="t" style="top:188.10px;font-size:14.3px;line-height:14.3px;color:#595959;font-weight:400;left:92.55px;width:900px;text-align:center;">H</div>
<div style="left:567.90px;top:181.00px;width:1.00px;height:28.50px;background:#e3e3e3"></div>
<div class="t" style="top:188.10px;font-size:14.3px;line-height:14.3px;color:#595959;font-weight:400;left:144.95px;width:900px;text-align:center;">I</div>
<div style="left:621.00px;top:181.00px;width:1.00px;height:28.50px;background:#e3e3e3"></div>
<div class="t" style="top:188.10px;font-size:14.3px;line-height:14.3px;color:#595959;font-weight:400;left:206.10px;width:900px;text-align:center;">J</div>
<div style="left:690.20px;top:181.00px;width:1.00px;height:28.50px;background:#e3e3e3"></div>
<div class="t" style="top:188.10px;font-size:14.3px;line-height:14.3px;color:#595959;font-weight:400;left:267.10px;width:900px;text-align:center;">K</div>
<div style="left:743.00px;top:181.00px;width:1.00px;height:28.50px;background:#e3e3e3"></div>
<div class="t" style="top:188.10px;font-size:14.3px;line-height:14.3px;color:#595959;font-weight:400;left:319.55px;width:900px;text-align:center;">L</div>
<div style="left:795.10px;top:181.00px;width:1.00px;height:28.50px;background:#e3e3e3"></div>
<div class="t" style="top:188.10px;font-size:14.3px;line-height:14.3px;color:#595959;font-weight:400;left:371.65px;width:900px;text-align:center;">M</div>
<div style="left:847.20px;top:181.00px;width:1.00px;height:28.50px;background:#e3e3e3"></div>
<div class="t" style="top:188.10px;font-size:14.3px;line-height:14.3px;color:#595959;font-weight:400;left:424.05px;width:900px;text-align:center;">N</div>
<div style="left:899.90px;top:181.00px;width:1.00px;height:28.50px;background:#e3e3e3"></div>
<div class="t" style="top:188.10px;font-size:14.3px;line-height:14.3px;color:#595959;font-weight:400;left:473.33px;width:900px;text-align:center;">O</div>
<div style="left:945.75px;top:181.00px;width:1.00px;height:28.50px;background:#e3e3e3"></div>
<div class="t" style="top:188.10px;font-size:14.3px;line-height:14.3px;color:#595959;font-weight:400;left:519.12px;width:900px;text-align:center;">P</div>
<div style="left:991.50px;top:181.00px;width:1.00px;height:28.50px;background:#e3e3e3"></div>
<div class="t" style="top:188.10px;font-size:14.3px;line-height:14.3px;color:#595959;font-weight:400;left:555.00px;width:900px;text-align:center;">Q</div>
<div style="left:1017.50px;top:181.00px;width:1.00px;height:28.50px;background:#e3e3e3"></div>
<div class="t" style="top:188.10px;font-size:14.3px;line-height:14.3px;color:#595959;font-weight:400;left:592.50px;width:900px;text-align:center;">R</div>
<div style="left:1066.50px;top:181.00px;width:1.00px;height:28.50px;background:#e3e3e3"></div>
<div class="t" style="top:188.10px;font-size:14.3px;line-height:14.3px;color:#595959;font-weight:400;left:638.50px;width:900px;text-align:center;">S</div>
<div style="left:1109.50px;top:181.00px;width:1.00px;height:28.50px;background:#e3e3e3"></div>
<div class="t" style="top:188.10px;font-size:14.3px;line-height:14.3px;color:#595959;font-weight:400;left:686.25px;width:900px;text-align:center;">T</div>
<div style="left:1162.00px;top:181.00px;width:1.00px;height:28.50px;background:#e3e3e3"></div>
<div class="t" style="top:188.10px;font-size:14.3px;line-height:14.3px;color:#595959;font-weight:400;left:738.55px;width:900px;text-align:center;">U</div>
<div style="left:1214.10px;top:181.00px;width:1.00px;height:28.50px;background:#e3e3e3"></div>
<div class="t" style="top:188.10px;font-size:14.3px;line-height:14.3px;color:#595959;font-weight:400;left:790.95px;width:900px;text-align:center;">V</div>
<div style="left:1266.80px;top:181.00px;width:1.00px;height:28.50px;background:#e3e3e3"></div>
<div class="t" style="top:188.10px;font-size:14.3px;line-height:14.3px;color:#595959;font-weight:400;left:843.35px;width:900px;text-align:center;">W</div>
<div style="left:1318.90px;top:181.00px;width:1.00px;height:28.50px;background:#e3e3e3"></div>
<div class="t" style="top:188.10px;font-size:14.3px;line-height:14.3px;color:#595959;font-weight:400;left:895.65px;width:900px;text-align:center;">X</div>
<div style="left:1371.40px;top:181.00px;width:1.00px;height:28.50px;background:#e3e3e3"></div>
<div class="t" style="top:188.10px;font-size:14.3px;line-height:14.3px;color:#595959;font-weight:400;left:948.05px;width:900px;text-align:center;">Y</div>
<div style="left:1423.70px;top:181.00px;width:1.00px;height:28.50px;background:#e3e3e3"></div>
<div class="t" style="top:188.10px;font-size:14.3px;line-height:14.3px;color:#595959;font-weight:400;left:1000.45px;width:900px;text-align:center;">Z</div>
<div style="left:1476.20px;top:181.00px;width:1.00px;height:28.50px;background:#e3e3e3"></div>
<div class="t" style="top:188.10px;font-size:14.3px;line-height:14.3px;color:#595959;font-weight:400;left:1049.60px;width:900px;text-align:center;">AA</div>
<div style="left:1522.00px;top:181.00px;width:1.00px;height:28.50px;background:#e3e3e3"></div>
<div class="t" style="top:188.10px;font-size:14.3px;line-height:14.3px;color:#595959;font-weight:400;left:1094.60px;width:900px;text-align:center;">AB</div>
<div style="left:162.10px;top:181.00px;width:153.60px;height:28.50px;background:#ececec"></div>
<div class="t" style="top:188.10px;font-size:14.3px;line-height:14.3px;color:#107c41;font-weight:400;left:-211.10px;width:900px;text-align:center;">C</div>
<div style="left:162.10px;top:206.80px;width:153.60px;height:3.20px;background:#107c41"></div>
<div style="left:0.00px;top:210.50px;width:27.00px;height:2.30px;background:#107c41"></div>
<div style="left:0.00px;top:212.80px;width:26.00px;height:668.20px;background:#f7f7f7"></div>
<div style="left:0.00px;top:231.50px;width:26.00px;height:1.00px;background:#e3e3e3"></div>
<div class="t" style="top:214.56px;font-size:16px;line-height:16px;color:#444;font-weight:400;left:-437.70px;width:900px;text-align:center;">2</div>
<div style="left:0.00px;top:251.16px;width:26.00px;height:1.00px;background:#e3e3e3"></div>
<div class="t" style="top:234.21px;font-size:16px;line-height:16px;color:#444;font-weight:400;left:-437.70px;width:900px;text-align:center;">3</div>
<div style="left:0.00px;top:270.81px;width:26.00px;height:1.00px;background:#e3e3e3"></div>
<div class="t" style="top:253.87px;font-size:16px;line-height:16px;color:#444;font-weight:400;left:-437.70px;width:900px;text-align:center;">4</div>
<div style="left:0.00px;top:290.47px;width:26.00px;height:1.00px;background:#e3e3e3"></div>
<div class="t" style="top:273.52px;font-size:16px;line-height:16px;color:#444;font-weight:400;left:-437.70px;width:900px;text-align:center;">5</div>
<div style="left:0.00px;top:290.97px;width:26.00px;height:19.66px;background:#e9e9e9"></div>
<div style="left:24.50px;top:290.97px;width:2.50px;height:19.66px;background:#107c41"></div>
<div style="left:0.00px;top:310.12px;width:26.00px;height:1.00px;background:#e3e3e3"></div>
<div class="t" style="top:293.18px;font-size:16px;line-height:16px;color:#107c41;font-weight:400;left:-437.70px;width:900px;text-align:center;">6</div>
<div style="left:0.00px;top:329.78px;width:26.00px;height:1.00px;background:#e3e3e3"></div>
<div class="t" style="top:312.84px;font-size:16px;line-height:16px;color:#444;font-weight:400;left:-437.70px;width:900px;text-align:center;">7</div>
<div style="left:0.00px;top:349.44px;width:26.00px;height:1.00px;background:#e3e3e3"></div>
<div class="t" style="top:332.49px;font-size:16px;line-height:16px;color:#444;font-weight:400;left:-437.70px;width:900px;text-align:center;">8</div>
<div style="left:0.00px;top:369.09px;width:26.00px;height:1.00px;background:#e3e3e3"></div>
<div class="t" style="top:352.15px;font-size:16px;line-height:16px;color:#444;font-weight:400;left:-437.70px;width:900px;text-align:center;">9</div>
<div style="left:0.00px;top:388.75px;width:26.00px;height:1.00px;background:#e3e3e3"></div>
<div class="t" style="top:371.80px;font-size:16px;line-height:16px;color:#444;font-weight:400;left:-437.70px;width:900px;text-align:center;">10</div>
<div style="left:0.00px;top:408.40px;width:26.00px;height:1.00px;background:#e3e3e3"></div>
<div class="t" style="top:391.46px;font-size:16px;line-height:16px;color:#444;font-weight:400;left:-437.70px;width:900px;text-align:center;">11</div>
<div style="left:0.00px;top:428.06px;width:26.00px;height:1.00px;background:#e3e3e3"></div>
<div class="t" style="top:411.12px;font-size:16px;line-height:16px;color:#444;font-weight:400;left:-437.70px;width:900px;text-align:center;">12</div>
<div style="left:0.00px;top:447.72px;width:26.00px;height:1.00px;background:#e3e3e3"></div>
<div class="t" style="top:430.77px;font-size:16px;line-height:16px;color:#444;font-weight:400;left:-437.70px;width:900px;text-align:center;">13</div>
<div style="left:0.00px;top:467.37px;width:26.00px;height:1.00px;background:#e3e3e3"></div>
<div class="t" style="top:450.43px;font-size:16px;line-height:16px;color:#444;font-weight:400;left:-437.70px;width:900px;text-align:center;">14</div>
<div style="left:0.00px;top:487.03px;width:26.00px;height:1.00px;background:#e3e3e3"></div>
<div class="t" style="top:470.08px;font-size:16px;line-height:16px;color:#444;font-weight:400;left:-437.70px;width:900px;text-align:center;">15</div>
<div style="left:0.00px;top:506.68px;width:26.00px;height:1.00px;background:#e3e3e3"></div>
<div class="t" style="top:489.74px;font-size:16px;line-height:16px;color:#444;font-weight:400;left:-437.70px;width:900px;text-align:center;">16</div>
<div style="left:0.00px;top:526.34px;width:26.00px;height:1.00px;background:#e3e3e3"></div>
<div class="t" style="top:509.40px;font-size:16px;line-height:16px;color:#444;font-weight:400;left:-437.70px;width:900px;text-align:center;">17</div>
<div style="left:0.00px;top:546.00px;width:26.00px;height:1.00px;background:#e3e3e3"></div>
<div class="t" style="top:529.05px;font-size:16px;line-height:16px;color:#444;font-weight:400;left:-437.70px;width:900px;text-align:center;">18</div>
<div style="left:0.00px;top:565.65px;width:26.00px;height:1.00px;background:#e3e3e3"></div>
<div class="t" style="top:548.71px;font-size:16px;line-height:16px;color:#444;font-weight:400;left:-437.70px;width:900px;text-align:center;">19</div>
<div style="left:0.00px;top:585.31px;width:26.00px;height:1.00px;background:#e3e3e3"></div>
<div class="t" style="top:568.36px;font-size:16px;line-height:16px;color:#444;font-weight:400;left:-437.70px;width:900px;text-align:center;">20</div>
<div style="left:0.00px;top:604.96px;width:26.00px;height:1.00px;background:#e3e3e3"></div>
<div class="t" style="top:588.02px;font-size:16px;line-height:16px;color:#444;font-weight:400;left:-437.70px;width:900px;text-align:center;">21</div>
<div style="left:0.00px;top:624.62px;width:26.00px;height:1.00px;background:#e3e3e3"></div>
<div class="t" style="top:607.68px;font-size:16px;line-height:16px;color:#444;font-weight:400;left:-437.70px;width:900px;text-align:center;">22</div>
<div style="left:0.00px;top:644.28px;width:26.00px;height:1.00px;background:#e3e3e3"></div>
<div class="t" style="top:627.33px;font-size:16px;line-height:16px;color:#444;font-weight:400;left:-437.70px;width:900px;text-align:center;">23</div>
<div style="left:0.00px;top:663.93px;width:26.00px;height:1.00px;background:#e3e3e3"></div>
<div class="t" style="top:646.99px;font-size:16px;line-height:16px;color:#444;font-weight:400;left:-437.70px;width:900px;text-align:center;">24</div>
<div style="left:0.00px;top:683.59px;width:26.00px;height:1.00px;background:#e3e3e3"></div>
<div class="t" style="top:666.64px;font-size:16px;line-height:16px;color:#444;font-weight:400;left:-437.70px;width:900px;text-align:center;">25</div>
<div style="left:0.00px;top:703.24px;width:26.00px;height:1.00px;background:#e3e3e3"></div>
<div class="t" style="top:686.30px;font-size:16px;line-height:16px;color:#444;font-weight:400;left:-437.70px;width:900px;text-align:center;">26</div>
<div style="left:0.00px;top:722.90px;width:26.00px;height:1.00px;background:#e3e3e3"></div>
<div class="t" style="top:705.96px;font-size:16px;line-height:16px;color:#444;font-weight:400;left:-437.70px;width:900px;text-align:center;">27</div>
<div style="left:0.00px;top:742.56px;width:26.00px;height:1.00px;background:#e3e3e3"></div>
<div class="t" style="top:725.61px;font-size:16px;line-height:16px;color:#444;font-weight:400;left:-437.70px;width:900px;text-align:center;">28</div>
<div style="left:0.00px;top:762.21px;width:26.00px;height:1.00px;background:#e3e3e3"></div>
<div class="t" style="top:745.27px;font-size:16px;line-height:16px;color:#444;font-weight:400;left:-437.70px;width:900px;text-align:center;">29</div>
<div style="left:0.00px;top:781.87px;width:26.00px;height:1.00px;background:#e3e3e3"></div>
<div class="t" style="top:764.92px;font-size:16px;line-height:16px;color:#444;font-weight:400;left:-437.70px;width:900px;text-align:center;">30</div>
<div style="left:0.00px;top:801.52px;width:26.00px;height:1.00px;background:#e3e3e3"></div>
<div class="t" style="top:784.58px;font-size:16px;line-height:16px;color:#444;font-weight:400;left:-437.70px;width:900px;text-align:center;">31</div>
<div style="left:0.00px;top:821.18px;width:26.00px;height:1.00px;background:#e3e3e3"></div>
<div class="t" style="top:804.24px;font-size:16px;line-height:16px;color:#444;font-weight:400;left:-437.70px;width:900px;text-align:center;">32</div>
<div style="left:0.00px;top:840.84px;width:26.00px;height:1.00px;background:#e3e3e3"></div>
<div class="t" style="top:823.89px;font-size:16px;line-height:16px;color:#444;font-weight:400;left:-437.70px;width:900px;text-align:center;">33</div>
<div style="left:0.00px;top:860.49px;width:26.00px;height:1.00px;background:#e3e3e3"></div>
<div class="t" style="top:843.55px;font-size:16px;line-height:16px;color:#444;font-weight:400;left:-437.70px;width:900px;text-align:center;">34</div>
<div style="left:0.00px;top:880.15px;width:26.00px;height:1.00px;background:#e3e3e3"></div>
<div class="t" style="top:863.20px;font-size:16px;line-height:16px;color:#444;font-weight:400;left:-437.70px;width:900px;text-align:center;">35</div>
<div style="left:27.60px;top:211.10px;width:1539.00px;height:669.90px;background:#fff"></div>
<div style="left:1553.40px;top:213.00px;width:8.60px;height:338.00px;background:#a9a9a9;border-radius:4.3px"></div>
<div class="t" style="top:214.71px;font-size:17px;line-height:17px;color:#a0a0a0;font-weight:400;left:54.20px;transform:scaleX(0.945);transform-origin:left center;-webkit-text-stroke-width:0.35px;">Type</div>
<div class="t" style="top:214.71px;font-size:17px;line-height:17px;color:#a0a0a0;font-weight:400;left:166.10px;transform:scaleX(0.945);transform-origin:left center;-webkit-text-stroke-width:0.35px;">Impact Analysis &gt; Data Tables &gt; Multiple</div>
<div class="t" style="top:234.37px;font-size:17px;line-height:17px;color:#a0a0a0;font-weight:400;left:54.20px;transform:scaleX(0.945);transform-origin:left center;-webkit-text-stroke-width:0.35px;">Created</div>
<div class="t" style="top:234.37px;font-size:17px;line-height:17px;color:#a0a0a0;font-weight:400;left:166.10px;transform:scaleX(0.945);transform-origin:left center;-webkit-text-stroke-width:0.35px;">Tuesday, 7 October 2025 at 08:06</div>
<div class="t" style="top:254.02px;font-size:17px;line-height:17px;color:#a0a0a0;font-weight:400;left:54.20px;transform:scaleX(0.945);transform-origin:left center;-webkit-text-stroke-width:0.35px;">Updated</div>
<div class="t" style="top:254.02px;font-size:17px;line-height:17px;color:#a0a0a0;font-weight:400;left:166.10px;transform:scaleX(0.945);transform-origin:left center;-webkit-text-stroke-width:0.35px;">Tuesday, 7 October 2025 at 08:06</div>
<div style="left:50.20px;top:310.12px;width:265.50px;height:20.16px;background:#808080"></div>
<div class="t" style="top:312.99px;font-size:17px;line-height:17px;color:#fff;font-weight:700;left:54.20px;transform:scaleX(0.945);transform-origin:left center;">Input (Horizontal)</div>
<div style="left:162.10px;top:330.28px;width:153.60px;height:19.66px;background:#ddebf7"></div>
<div style="left:162.10px;top:347.94px;width:153.60px;height:2.00px;background-image:repeating-linear-gradient(90deg,#222 0 1px,transparent 1px 2px)"></div>
<div style="left:162.10px;top:349.94px;width:153.60px;height:19.66px;background:#ddebf7"></div>
<div style="left:162.10px;top:367.59px;width:153.60px;height:2.00px;background-image:repeating-linear-gradient(90deg,#222 0 1px,transparent 1px 2px)"></div>
<div class="t" style="top:332.65px;font-size:17px;line-height:17px;color:#000;font-weight:400;left:54.20px;transform:scaleX(0.945);transform-origin:left center;-webkit-text-stroke-width:0.35px;">Name</div>
<div class="t" style="top:352.30px;font-size:17px;line-height:17px;color:#000;font-weight:400;left:54.20px;transform:scaleX(0.945);transform-origin:left center;-webkit-text-stroke-width:0.35px;">Reference</div>
<div style="left:162.10px;top:330.28px;width:153.60px;height:19.66px;overflow:hidden"><div class="t" style="position:absolute;top:2.37px;font-size:17px;line-height:17px;color:#000;font-weight:400;left:-750.40px;width:900px;text-align:right;transform:scaleX(0.945);transform-origin:right center;-webkit-text-stroke-width:0.35px;">Tax Rate</div></div>
<div class="t" style="top:352.30px;font-size:17px;line-height:17px;color:#000;font-weight:400;left:-588.30px;width:900px;text-align:right;transform:scaleX(0.78);transform-origin:right center;-webkit-text-stroke-width:0.35px;">30.0%</div>
<div style="left:50.20px;top:388.75px;width:265.50px;height:20.16px;background:#808080"></div>
<div class="t" style="top:391.61px;font-size:17px;line-height:17px;color:#fff;font-weight:700;left:54.20px;transform:scaleX(0.945);transform-origin:left center;">Input (Horizontal)</div>
<div style="left:162.10px;top:408.90px;width:153.60px;height:19.66px;background:#ddebf7"></div>
<div style="left:162.10px;top:426.56px;width:153.60px;height:2.00px;background-image:repeating-linear-gradient(90deg,#222 0 1px,transparent 1px 2px)"></div>
<div style="left:162.10px;top:428.56px;width:153.60px;height:19.66px;background:#ddebf7"></div>
<div style="left:162.10px;top:446.22px;width:153.60px;height:2.00px;background-image:repeating-linear-gradient(90deg,#222 0 1px,transparent 1px 2px)"></div>
<div class="t" style="top:411.27px;font-size:17px;line-height:17px;color:#000;font-weight:400;left:54.20px;transform:scaleX(0.945);transform-origin:left center;-webkit-text-stroke-width:0.35px;">Name</div>
<div class="t" style="top:430.93px;font-size:17px;line-height:17px;color:#000;font-weight:400;left:54.20px;transform:scaleX(0.945);transform-origin:left center;-webkit-text-stroke-width:0.35px;">Reference</div>
<div style="left:162.10px;top:408.90px;width:153.60px;height:19.66px;overflow:hidden"><div class="t" style="position:absolute;top:2.37px;font-size:17px;line-height:17px;color:#000;font-weight:400;left:-750.40px;width:900px;text-align:right;transform:scaleX(0.97);transform-origin:right center;-webkit-text-stroke-width:0.35px;">ev. Growth (Yr 1 - 3)</div></div>
<div class="t" style="top:430.93px;font-size:17px;line-height:17px;color:#000;font-weight:400;left:-588.30px;width:900px;text-align:right;transform:scaleX(0.78);transform-origin:right center;-webkit-text-stroke-width:0.35px;">5.0%</div>
<div style="left:50.20px;top:467.37px;width:265.50px;height:20.16px;background:#1f3864"></div>
<div class="t" style="top:470.24px;font-size:17px;line-height:17px;color:#fff;font-weight:700;left:54.20px;transform:scaleX(0.945);transform-origin:left center;">Input (Vertical)</div>
<div style="left:162.10px;top:487.53px;width:153.60px;height:19.66px;background:#ddebf7"></div>
<div style="left:162.10px;top:505.18px;width:153.60px;height:2.00px;background-image:repeating-linear-gradient(90deg,#222 0 1px,transparent 1px 2px)"></div>
<div style="left:162.10px;top:507.18px;width:153.60px;height:19.66px;background:#ddebf7"></div>
<div style="left:162.10px;top:524.84px;width:153.60px;height:2.00px;background-image:repeating-linear-gradient(90deg,#222 0 1px,transparent 1px 2px)"></div>
<div class="t" style="top:489.89px;font-size:17px;line-height:17px;color:#000;font-weight:400;left:54.20px;transform:scaleX(0.945);transform-origin:left center;-webkit-text-stroke-width:0.35px;">Name</div>
<div class="t" style="top:509.55px;font-size:17px;line-height:17px;color:#000;font-weight:400;left:54.20px;transform:scaleX(0.945);transform-origin:left center;-webkit-text-stroke-width:0.35px;">Reference</div>
<div style="left:162.10px;top:487.53px;width:153.60px;height:19.66px;overflow:hidden"><div class="t" style="position:absolute;top:2.37px;font-size:17px;line-height:17px;color:#000;font-weight:400;left:-750.40px;width:900px;text-align:right;transform:scaleX(0.945);transform-origin:right center;-webkit-text-stroke-width:0.35px;">WACC</div></div>
<div class="t" style="top:509.55px;font-size:17px;line-height:17px;color:#000;font-weight:400;left:-588.30px;width:900px;text-align:right;transform:scaleX(0.78);transform-origin:right center;-webkit-text-stroke-width:0.35px;">8.0%</div>
<div style="left:50.20px;top:546.00px;width:265.50px;height:20.16px;background:#1f3864"></div>
<div class="t" style="top:548.86px;font-size:17px;line-height:17px;color:#fff;font-weight:700;left:54.20px;transform:scaleX(0.945);transform-origin:left center;">Input (Vertical)</div>
<div style="left:162.10px;top:566.15px;width:153.60px;height:19.66px;background:#ddebf7"></div>
<div style="left:162.10px;top:583.81px;width:153.60px;height:2.00px;background-image:repeating-linear-gradient(90deg,#222 0 1px,transparent 1px 2px)"></div>
<div style="left:162.10px;top:585.81px;width:153.60px;height:19.66px;background:#ddebf7"></div>
<div style="left:162.10px;top:603.46px;width:153.60px;height:2.00px;background-image:repeating-linear-gradient(90deg,#222 0 1px,transparent 1px 2px)"></div>
<div class="t" style="top:568.52px;font-size:17px;line-height:17px;color:#000;font-weight:400;left:54.20px;transform:scaleX(0.945);transform-origin:left center;-webkit-text-stroke-width:0.35px;">Name</div>
<div class="t" style="top:588.17px;font-size:17px;line-height:17px;color:#000;font-weight:400;left:54.20px;transform:scaleX(0.945);transform-origin:left center;-webkit-text-stroke-width:0.35px;">Reference</div>
<div style="left:162.10px;top:566.15px;width:153.60px;height:19.66px;overflow:hidden"><div class="t" style="position:absolute;top:2.37px;font-size:17px;line-height:17px;color:#000;font-weight:400;left:-750.40px;width:900px;text-align:right;transform:scaleX(0.945);transform-origin:right center;-webkit-text-stroke-width:0.35px;">Terminal Growth</div></div>
<div class="t" style="top:588.17px;font-size:17px;line-height:17px;color:#000;font-weight:400;left:-588.30px;width:900px;text-align:right;transform:scaleX(0.78);transform-origin:right center;-webkit-text-stroke-width:0.35px;">2.0%</div>
<div style="left:50.20px;top:624.62px;width:265.50px;height:20.16px;background:#ffc000"></div>
<div class="t" style="top:627.49px;font-size:17px;line-height:17px;color:#000;font-weight:700;left:54.20px;transform:scaleX(0.945);transform-origin:left center;">Output</div>
<div style="left:162.10px;top:644.78px;width:153.60px;height:19.66px;background:#ddebf7"></div>
<div style="left:162.10px;top:662.43px;width:153.60px;height:2.00px;background-image:repeating-linear-gradient(90deg,#222 0 1px,transparent 1px 2px)"></div>
<div style="left:162.10px;top:664.43px;width:153.60px;height:19.66px;background:#ddebf7"></div>
<div style="left:162.10px;top:682.09px;width:153.60px;height:2.00px;background-image:repeating-linear-gradient(90deg,#222 0 1px,transparent 1px 2px)"></div>
<div class="t" style="top:647.14px;font-size:17px;line-height:17px;color:#000;font-weight:400;left:54.20px;transform:scaleX(0.945);transform-origin:left center;-webkit-text-stroke-width:0.35px;">Name</div>
<div class="t" style="top:666.80px;font-size:17px;line-height:17px;color:#000;font-weight:400;left:54.20px;transform:scaleX(0.945);transform-origin:left center;-webkit-text-stroke-width:0.35px;">Reference</div>
<div style="left:162.10px;top:644.78px;width:153.60px;height:19.66px;overflow:hidden"><div class="t" style="position:absolute;top:2.37px;font-size:17px;line-height:17px;color:#000;font-weight:400;left:-750.40px;width:900px;text-align:right;transform:scaleX(0.945);transform-origin:right center;-webkit-text-stroke-width:0.35px;">Enterprise Value</div></div>
<div class="t" style="top:666.80px;font-size:17px;line-height:17px;color:#000;font-weight:400;left:-588.30px;width:900px;text-align:right;transform:scaleX(0.78);transform-origin:right center;-webkit-text-stroke-width:0.35px;">224</div>
<div style="left:161.50px;top:289.50px;width:155.20px;height:22.90px;border:2.2px solid #107c41;box-sizing:border-box"></div>
<div style="left:311.00px;top:307.20px;width:7.50px;height:7.00px;background:#107c41;border:1px solid #fff;box-sizing:content-box"></div>
<div style="left:516.70px;top:310.62px;width:383.70px;height:19.66px;background:#808080"></div>
<div class="t" style="top:312.54px;font-size:17px;line-height:17px;color:#fff;font-weight:400;left:258.55px;width:900px;text-align:center;transform:scaleX(0.92);transform-origin:center center;-webkit-text-stroke-width:0.5px;">Tax Rate</div>
<div style="left:516.70px;top:330.28px;width:383.70px;height:39.31px;background:#e2efda"></div>
<div style="left:415.60px;top:369.59px;width:101.10px;height:137.59px;background:#e2efda"></div>
<div style="left:389.20px;top:369.59px;width:26.40px;height:137.59px;background:#1f3864"></div>
<div class="t" style="left:302.40px;top:428.53px;width:200px;text-align:center;font-size:17px;line-height:19.72px;color:#fff;font-weight:400;-webkit-text-stroke-width:0.35px;transform:rotate(-90deg) scaleX(0.77);transform-origin:center center">WACC</div>
<div class="t" style="top:332.65px;font-size:17px;line-height:17px;color:#7c7c7c;font-weight:400;left:-335.60px;width:900px;text-align:right;transform:scaleX(0.78);transform-origin:right center;-webkit-text-stroke-width:0.35px;">(30%)</div>
<div class="t" style="top:352.30px;font-size:17px;line-height:17px;color:#000;font-weight:400;left:-335.60px;width:900px;text-align:right;transform:scaleX(0.78);transform-origin:right center;-webkit-text-stroke-width:0.35px;">21.0%</div>
<div class="t" style="top:332.65px;font-size:17px;line-height:17px;color:#7c7c7c;font-weight:400;left:-282.50px;width:900px;text-align:right;transform:scaleX(0.78);transform-origin:right center;-webkit-text-stroke-width:0.35px;">(20%)</div>
<div class="t" style="top:352.30px;font-size:17px;line-height:17px;color:#000;font-weight:400;left:-282.50px;width:900px;text-align:right;transform:scaleX(0.78);transform-origin:right center;-webkit-text-stroke-width:0.35px;">24.0%</div>
<div class="t" style="top:332.65px;font-size:17px;line-height:17px;color:#7c7c7c;font-weight:400;left:-213.30px;width:900px;text-align:right;transform:scaleX(0.78);transform-origin:right center;-webkit-text-stroke-width:0.35px;">(10%)</div>
<div class="t" style="top:352.30px;font-size:17px;line-height:17px;color:#000;font-weight:400;left:-213.30px;width:900px;text-align:right;transform:scaleX(0.78);transform-origin:right center;-webkit-text-stroke-width:0.35px;">27.0%</div>
<div class="t" style="top:332.65px;font-size:17px;line-height:17px;color:#7c7c7c;font-weight:400;left:-160.50px;width:900px;text-align:right;transform:scaleX(0.78);transform-origin:right center;-webkit-text-stroke-width:0.35px;">0%</div>
<div class="t" style="top:352.30px;font-size:17px;line-height:17px;color:#000;font-weight:400;left:-160.50px;width:900px;text-align:right;transform:scaleX(0.78);transform-origin:right center;-webkit-text-stroke-width:0.35px;">30.0%</div>
<div class="t" style="top:332.65px;font-size:17px;line-height:17px;color:#7c7c7c;font-weight:400;left:-108.40px;width:900px;text-align:right;transform:scaleX(0.78);transform-origin:right center;-webkit-text-stroke-width:0.35px;">10%</div>
<div class="t" style="top:352.30px;font-size:17px;line-height:17px;color:#000;font-weight:400;left:-108.40px;width:900px;text-align:right;transform:scaleX(0.78);transform-origin:right center;-webkit-text-stroke-width:0.35px;">33.0%</div>
<div class="t" style="top:332.65px;font-size:17px;line-height:17px;color:#7c7c7c;font-weight:400;left:-56.30px;width:900px;text-align:right;transform:scaleX(0.78);transform-origin:right center;-webkit-text-stroke-width:0.35px;">20%</div>
<div class="t" style="top:352.30px;font-size:17px;line-height:17px;color:#000;font-weight:400;left:-56.30px;width:900px;text-align:right;transform:scaleX(0.78);transform-origin:right center;-webkit-text-stroke-width:0.35px;">36.0%</div>
<div class="t" style="top:332.65px;font-size:17px;line-height:17px;color:#7c7c7c;font-weight:400;left:-3.60px;width:900px;text-align:right;transform:scaleX(0.78);transform-origin:right center;-webkit-text-stroke-width:0.35px;">30%</div>
<div class="t" style="top:352.30px;font-size:17px;line-height:17px;color:#000;font-weight:400;left:-3.60px;width:900px;text-align:right;transform:scaleX(0.78);transform-origin:right center;-webkit-text-stroke-width:0.35px;">39.0%</div>
<div class="t" style="top:371.96px;font-size:17px;line-height:17px;color:#7c7c7c;font-weight:400;left:-439.40px;width:900px;text-align:right;transform:scaleX(0.78);transform-origin:right center;-webkit-text-stroke-width:0.35px;">(30%)</div>
<div class="t" style="top:371.96px;font-size:17px;line-height:17px;color:#000;font-weight:400;left:-387.30px;width:900px;text-align:right;transform:scaleX(0.78);transform-origin:right center;-webkit-text-stroke-width:0.35px;">5.6%</div>
<div style="left:516.00px;top:369.59px;width:53.00px;height:20.06px;background:#5b9bd5"></div>
<div class="t" style="top:371.96px;font-size:17px;line-height:17px;color:#000;font-weight:400;left:-335.60px;width:900px;text-align:right;transform:scaleX(0.78);transform-origin:right center;-webkit-text-stroke-width:0.35px;">431</div>
<div style="left:568.00px;top:369.59px;width:54.00px;height:20.06px;background:#6fa7da"></div>
<div class="t" style="top:371.96px;font-size:17px;line-height:17px;color:#000;font-weight:400;left:-282.50px;width:900px;text-align:right;transform:scaleX(0.78);transform-origin:right center;-webkit-text-stroke-width:0.35px;">413</div>
<div style="left:621.00px;top:369.59px;width:70.00px;height:20.06px;background:#84b4e0"></div>
<div class="t" style="top:371.96px;font-size:17px;line-height:17px;color:#000;font-weight:400;left:-213.30px;width:900px;text-align:right;transform:scaleX(0.78);transform-origin:right center;-webkit-text-stroke-width:0.35px;">394</div>
<div style="left:690.00px;top:369.59px;width:54.00px;height:20.06px;background:#98c0e5"></div>
<div class="t" style="top:371.96px;font-size:17px;line-height:17px;color:#000;font-weight:400;left:-160.50px;width:900px;text-align:right;transform:scaleX(0.78);transform-origin:right center;-webkit-text-stroke-width:0.35px;">376</div>
<div style="left:743.00px;top:369.59px;width:53.00px;height:20.06px;background:#adcdea"></div>
<div class="t" style="top:371.96px;font-size:17px;line-height:17px;color:#000;font-weight:400;left:-108.40px;width:900px;text-align:right;transform:scaleX(0.78);transform-origin:right center;-webkit-text-stroke-width:0.35px;">357</div>
<div style="left:795.00px;top:369.59px;width:53.00px;height:20.06px;background:#c1d9ef"></div>
<div class="t" style="top:371.96px;font-size:17px;line-height:17px;color:#000;font-weight:400;left:-56.30px;width:900px;text-align:right;transform:scaleX(0.78);transform-origin:right center;-webkit-text-stroke-width:0.35px;">339</div>
<div style="left:847.00px;top:369.59px;width:54.00px;height:20.06px;background:#d6e6f5"></div>
<div class="t" style="top:371.96px;font-size:17px;line-height:17px;color:#000;font-weight:400;left:-3.60px;width:900px;text-align:right;transform:scaleX(0.78);transform-origin:right center;-webkit-text-stroke-width:0.35px;">320</div>
<div class="t" style="top:391.61px;font-size:17px;line-height:17px;color:#7c7c7c;font-weight:400;left:-439.40px;width:900px;text-align:right;transform:scaleX(0.78);transform-origin:right center;-webkit-text-stroke-width:0.35px;">(20%)</div>
<div class="t" style="top:391.61px;font-size:17px;line-height:17px;color:#000;font-weight:400;left:-387.30px;width:900px;text-align:right;transform:scaleX(0.78);transform-origin:right center;-webkit-text-stroke-width:0.35px;">6.4%</div>
<div style="left:516.00px;top:389.25px;width:53.00px;height:20.06px;background:#b3d1eb"></div>
<div class="t" style="top:391.61px;font-size:17px;line-height:17px;color:#000;font-weight:400;left:-335.60px;width:900px;text-align:right;transform:scaleX(0.78);transform-origin:right center;-webkit-text-stroke-width:0.35px;">352</div>
<div style="left:568.00px;top:389.25px;width:54.00px;height:20.06px;background:#c4dbf0"></div>
<div class="t" style="top:391.61px;font-size:17px;line-height:17px;color:#000;font-weight:400;left:-282.50px;width:900px;text-align:right;transform:scaleX(0.78);transform-origin:right center;-webkit-text-stroke-width:0.35px;">337</div>
<div style="left:621.00px;top:389.25px;width:70.00px;height:20.06px;background:#d4e5f4"></div>
<div class="t" style="top:391.61px;font-size:17px;line-height:17px;color:#000;font-weight:400;left:-213.30px;width:900px;text-align:right;transform:scaleX(0.78);transform-origin:right center;-webkit-text-stroke-width:0.35px;">322</div>
<div style="left:690.00px;top:389.25px;width:54.00px;height:20.06px;background:#e5eff8"></div>
<div class="t" style="top:391.61px;font-size:17px;line-height:17px;color:#000;font-weight:400;left:-160.50px;width:900px;text-align:right;transform:scaleX(0.78);transform-origin:right center;-webkit-text-stroke-width:0.35px;">307</div>
<div style="left:743.00px;top:389.25px;width:53.00px;height:20.06px;background:#f6f9fd"></div>
<div class="t" style="top:391.61px;font-size:17px;line-height:17px;color:#000;font-weight:400;left:-108.40px;width:900px;text-align:right;transform:scaleX(0.78);transform-origin:right center;-webkit-text-stroke-width:0.35px;">292</div>
<div style="left:795.00px;top:389.25px;width:53.00px;height:20.06px;background:#fcfcfc"></div>
<div class="t" style="top:391.61px;font-size:17px;line-height:17px;color:#000;font-weight:400;left:-56.30px;width:900px;text-align:right;transform:scaleX(0.78);transform-origin:right center;-webkit-text-stroke-width:0.35px;">277</div>
<div style="left:847.00px;top:389.25px;width:54.00px;height:20.06px;background:#f6f6f6"></div>
<div class="t" style="top:391.61px;font-size:17px;line-height:17px;color:#000;font-weight:400;left:-3.60px;width:900px;text-align:right;transform:scaleX(0.78);transform-origin:right center;-webkit-text-stroke-width:0.35px;">262</div>
<div class="t" style="top:411.27px;font-size:17px;line-height:17px;color:#7c7c7c;font-weight:400;left:-439.40px;width:900px;text-align:right;transform:scaleX(0.78);transform-origin:right center;-webkit-text-stroke-width:0.35px;">(10%)</div>
<div class="t" style="top:411.27px;font-size:17px;line-height:17px;color:#000;font-weight:400;left:-387.30px;width:900px;text-align:right;transform:scaleX(0.78);transform-origin:right center;-webkit-text-stroke-width:0.35px;">7.2%</div>
<div style="left:516.00px;top:408.90px;width:53.00px;height:20.06px;background:#f0f6fb"></div>
<div class="t" style="top:411.27px;font-size:17px;line-height:17px;color:#000;font-weight:400;left:-335.60px;width:900px;text-align:right;transform:scaleX(0.78);transform-origin:right center;-webkit-text-stroke-width:0.35px;">297</div>
<div style="left:568.00px;top:408.90px;width:54.00px;height:20.06px;background:#feffff"></div>
<div class="t" style="top:411.27px;font-size:17px;line-height:17px;color:#000;font-weight:400;left:-282.50px;width:900px;text-align:right;transform:scaleX(0.78);transform-origin:right center;-webkit-text-stroke-width:0.35px;">284</div>
<div style="left:621.00px;top:408.90px;width:70.00px;height:20.06px;background:#fafafa"></div>
<div class="t" style="top:411.27px;font-size:17px;line-height:17px;color:#000;font-weight:400;left:-213.30px;width:900px;text-align:right;transform:scaleX(0.78);transform-origin:right center;-webkit-text-stroke-width:0.35px;">272</div>
<div style="left:690.00px;top:408.90px;width:54.00px;height:20.06px;background:#f4f4f4"></div>
<div class="t" style="top:411.27px;font-size:17px;line-height:17px;color:#000;font-weight:400;left:-160.50px;width:900px;text-align:right;transform:scaleX(0.78);transform-origin:right center;-webkit-text-stroke-width:0.35px;">259</div>
<div style="left:743.00px;top:408.90px;width:53.00px;height:20.06px;background:#efefef"></div>
<div class="t" style="top:411.27px;font-size:17px;line-height:17px;color:#000;font-weight:400;left:-108.40px;width:900px;text-align:right;transform:scaleX(0.78);transform-origin:right center;-webkit-text-stroke-width:0.35px;">246</div>
<div style="left:795.00px;top:408.90px;width:53.00px;height:20.06px;background:#eaeaea"></div>
<div class="t" style="top:411.27px;font-size:17px;line-height:17px;color:#000;font-weight:400;left:-56.30px;width:900px;text-align:right;transform:scaleX(0.78);transform-origin:right center;-webkit-text-stroke-width:0.35px;">234</div>
<div style="left:847.00px;top:408.90px;width:54.00px;height:20.06px;background:#e4e4e4"></div>
<div class="t" style="top:411.27px;font-size:17px;line-height:17px;color:#000;font-weight:400;left:-3.60px;width:900px;text-align:right;transform:scaleX(0.78);transform-origin:right center;-webkit-text-stroke-width:0.35px;">221</div>
<div class="t" style="top:430.93px;font-size:17px;line-height:17px;color:#7c7c7c;font-weight:400;left:-439.40px;width:900px;text-align:right;transform:scaleX(0.78);transform-origin:right center;-webkit-text-stroke-width:0.35px;">0%</div>
<div class="t" style="top:430.93px;font-size:17px;line-height:17px;color:#000;font-weight:400;left:-387.30px;width:900px;text-align:right;transform:scaleX(0.78);transform-origin:right center;-webkit-text-stroke-width:0.35px;">8.0%</div>
<div style="left:516.00px;top:428.56px;width:53.00px;height:20.06px;background:#f4f4f4"></div>
<div class="t" style="top:430.93px;font-size:17px;line-height:17px;color:#000;font-weight:400;left:-335.60px;width:900px;text-align:right;transform:scaleX(0.78);transform-origin:right center;-webkit-text-stroke-width:0.35px;">257</div>
<div style="left:568.00px;top:428.56px;width:54.00px;height:20.06px;background:#efefef"></div>
<div class="t" style="top:430.93px;font-size:17px;line-height:17px;color:#000;font-weight:400;left:-282.50px;width:900px;text-align:right;transform:scaleX(0.78);transform-origin:right center;-webkit-text-stroke-width:0.35px;">246</div>
<div style="left:621.00px;top:428.56px;width:70.00px;height:20.06px;background:#eaeaea"></div>
<div class="t" style="top:430.93px;font-size:17px;line-height:17px;color:#000;font-weight:400;left:-213.30px;width:900px;text-align:right;transform:scaleX(0.78);transform-origin:right center;-webkit-text-stroke-width:0.35px;">235</div>
<div style="left:690.00px;top:428.56px;width:54.00px;height:20.06px;background:#e5e5e5"></div>
<div class="t" style="top:430.93px;font-size:17px;line-height:17px;color:#000;font-weight:400;left:-160.50px;width:900px;text-align:right;transform:scaleX(0.78);transform-origin:right center;-webkit-text-stroke-width:0.35px;">224</div>
<div style="left:743.00px;top:428.56px;width:53.00px;height:20.06px;background:#e0e0e0"></div>
<div class="t" style="top:430.93px;font-size:17px;line-height:17px;color:#000;font-weight:400;left:-108.40px;width:900px;text-align:right;transform:scaleX(0.78);transform-origin:right center;-webkit-text-stroke-width:0.35px;">213</div>
<div style="left:795.00px;top:428.56px;width:53.00px;height:20.06px;background:#dcdcdc"></div>
<div class="t" style="top:430.93px;font-size:17px;line-height:17px;color:#000;font-weight:400;left:-56.30px;width:900px;text-align:right;transform:scaleX(0.78);transform-origin:right center;-webkit-text-stroke-width:0.35px;">202</div>
<div style="left:847.00px;top:428.56px;width:54.00px;height:20.06px;background:#d7d7d7"></div>
<div class="t" style="top:430.93px;font-size:17px;line-height:17px;color:#000;font-weight:400;left:-3.60px;width:900px;text-align:right;transform:scaleX(0.78);transform-origin:right center;-webkit-text-stroke-width:0.35px;">191</div>
<div class="t" style="top:450.58px;font-size:17px;line-height:17px;color:#7c7c7c;font-weight:400;left:-439.40px;width:900px;text-align:right;transform:scaleX(0.78);transform-origin:right center;-webkit-text-stroke-width:0.35px;">10%</div>
<div class="t" style="top:450.58px;font-size:17px;line-height:17px;color:#000;font-weight:400;left:-387.30px;width:900px;text-align:right;transform:scaleX(0.78);transform-origin:right center;-webkit-text-stroke-width:0.35px;">8.8%</div>
<div style="left:516.00px;top:448.22px;width:53.00px;height:20.06px;background:#e6e6e6"></div>
<div class="t" style="top:450.58px;font-size:17px;line-height:17px;color:#000;font-weight:400;left:-335.60px;width:900px;text-align:right;transform:scaleX(0.78);transform-origin:right center;-webkit-text-stroke-width:0.35px;">226</div>
<div style="left:568.00px;top:448.22px;width:54.00px;height:20.06px;background:#e2e2e2"></div>
<div class="t" style="top:450.58px;font-size:17px;line-height:17px;color:#000;font-weight:400;left:-282.50px;width:900px;text-align:right;transform:scaleX(0.78);transform-origin:right center;-webkit-text-stroke-width:0.35px;">217</div>
<div style="left:621.00px;top:448.22px;width:70.00px;height:20.06px;background:#dedede"></div>
<div class="t" style="top:450.58px;font-size:17px;line-height:17px;color:#000;font-weight:400;left:-213.30px;width:900px;text-align:right;transform:scaleX(0.78);transform-origin:right center;-webkit-text-stroke-width:0.35px;">207</div>
<div style="left:690.00px;top:448.22px;width:54.00px;height:20.06px;background:#d9d9d9"></div>
<div class="t" style="top:450.58px;font-size:17px;line-height:17px;color:#000;font-weight:400;left:-160.50px;width:900px;text-align:right;transform:scaleX(0.78);transform-origin:right center;-webkit-text-stroke-width:0.35px;">197</div>
<div style="left:743.00px;top:448.22px;width:53.00px;height:20.06px;background:#d6d6d6"></div>
<div class="t" style="top:450.58px;font-size:17px;line-height:17px;color:#000;font-weight:400;left:-108.40px;width:900px;text-align:right;transform:scaleX(0.78);transform-origin:right center;-webkit-text-stroke-width:0.35px;">188</div>
<div style="left:795.00px;top:448.22px;width:53.00px;height:20.06px;background:#d1d1d1"></div>
<div class="t" style="top:450.58px;font-size:17px;line-height:17px;color:#000;font-weight:400;left:-56.30px;width:900px;text-align:right;transform:scaleX(0.78);transform-origin:right center;-webkit-text-stroke-width:0.35px;">178</div>
<div style="left:847.00px;top:448.22px;width:54.00px;height:20.06px;background:#cdcdcd"></div>
<div class="t" style="top:450.58px;font-size:17px;line-height:17px;color:#000;font-weight:400;left:-3.60px;width:900px;text-align:right;transform:scaleX(0.78);transform-origin:right center;-webkit-text-stroke-width:0.35px;">169</div>
<div class="t" style="top:470.24px;font-size:17px;line-height:17px;color:#7c7c7c;font-weight:400;left:-439.40px;width:900px;text-align:right;transform:scaleX(0.78);transform-origin:right center;-webkit-text-stroke-width:0.35px;">20%</div>
<div class="t" style="top:470.24px;font-size:17px;line-height:17px;color:#000;font-weight:400;left:-387.30px;width:900px;text-align:right;transform:scaleX(0.78);transform-origin:right center;-webkit-text-stroke-width:0.35px;">9.6%</div>
<div style="left:516.00px;top:467.87px;width:53.00px;height:20.06px;background:#dcdcdc"></div>
<div class="t" style="top:470.24px;font-size:17px;line-height:17px;color:#000;font-weight:400;left:-335.60px;width:900px;text-align:right;transform:scaleX(0.78);transform-origin:right center;-webkit-text-stroke-width:0.35px;">202</div>
<div style="left:568.00px;top:467.87px;width:54.00px;height:20.06px;background:#d8d8d8"></div>
<div class="t" style="top:470.24px;font-size:17px;line-height:17px;color:#000;font-weight:400;left:-282.50px;width:900px;text-align:right;transform:scaleX(0.78);transform-origin:right center;-webkit-text-stroke-width:0.35px;">193</div>
<div style="left:621.00px;top:467.87px;width:70.00px;height:20.06px;background:#d4d4d4"></div>
<div class="t" style="top:470.24px;font-size:17px;line-height:17px;color:#000;font-weight:400;left:-213.30px;width:900px;text-align:right;transform:scaleX(0.78);transform-origin:right center;-webkit-text-stroke-width:0.35px;">185</div>
<div style="left:690.00px;top:467.87px;width:54.00px;height:20.06px;background:#d0d0d0"></div>
<div class="t" style="top:470.24px;font-size:17px;line-height:17px;color:#000;font-weight:400;left:-160.50px;width:900px;text-align:right;transform:scaleX(0.78);transform-origin:right center;-webkit-text-stroke-width:0.35px;">176</div>
<div style="left:743.00px;top:467.87px;width:53.00px;height:20.06px;background:#cdcdcd"></div>
<div class="t" style="top:470.24px;font-size:17px;line-height:17px;color:#000;font-weight:400;left:-108.40px;width:900px;text-align:right;transform:scaleX(0.78);transform-origin:right center;-webkit-text-stroke-width:0.35px;">168</div>
<div style="left:795.00px;top:467.87px;width:53.00px;height:20.06px;background:#c9c9c9"></div>
<div class="t" style="top:470.24px;font-size:17px;line-height:17px;color:#000;font-weight:400;left:-56.30px;width:900px;text-align:right;transform:scaleX(0.78);transform-origin:right center;-webkit-text-stroke-width:0.35px;">159</div>
<div style="left:847.00px;top:467.87px;width:54.00px;height:20.06px;background:#c6c6c6"></div>
<div class="t" style="top:470.24px;font-size:17px;line-height:17px;color:#000;font-weight:400;left:-3.60px;width:900px;text-align:right;transform:scaleX(0.78);transform-origin:right center;-webkit-text-stroke-width:0.35px;">151</div>
<div class="t" style="top:489.89px;font-size:17px;line-height:17px;color:#7c7c7c;font-weight:400;left:-439.40px;width:900px;text-align:right;transform:scaleX(0.78);transform-origin:right center;-webkit-text-stroke-width:0.35px;">30%</div>
<div class="t" style="top:489.89px;font-size:17px;line-height:17px;color:#000;font-weight:400;left:-387.30px;width:900px;text-align:right;transform:scaleX(0.78);transform-origin:right center;-webkit-text-stroke-width:0.35px;">10.4%</div>
<div style="left:516.00px;top:487.53px;width:53.00px;height:20.06px;background:#d3d3d3"></div>
<div class="t" style="top:489.89px;font-size:17px;line-height:17px;color:#000;font-weight:400;left:-335.60px;width:900px;text-align:right;transform:scaleX(0.78);transform-origin:right center;-webkit-text-stroke-width:0.35px;">182</div>
<div style="left:568.00px;top:487.53px;width:54.00px;height:20.06px;background:#d0d0d0"></div>
<div class="t" style="top:489.89px;font-size:17px;line-height:17px;color:#000;font-weight:400;left:-282.50px;width:900px;text-align:right;transform:scaleX(0.78);transform-origin:right center;-webkit-text-stroke-width:0.35px;">175</div>
<div style="left:621.00px;top:487.53px;width:70.00px;height:20.06px;background:#cccccc"></div>
<div class="t" style="top:489.89px;font-size:17px;line-height:17px;color:#000;font-weight:400;left:-213.30px;width:900px;text-align:right;transform:scaleX(0.78);transform-origin:right center;-webkit-text-stroke-width:0.35px;">167</div>
<div style="left:690.00px;top:487.53px;width:54.00px;height:20.06px;background:#c9c9c9"></div>
<div class="t" style="top:489.89px;font-size:17px;line-height:17px;color:#000;font-weight:400;left:-160.50px;width:900px;text-align:right;transform:scaleX(0.78);transform-origin:right center;-webkit-text-stroke-width:0.35px;">159</div>
<div style="left:743.00px;top:487.53px;width:53.00px;height:20.06px;background:#c6c6c6"></div>
<div class="t" style="top:489.89px;font-size:17px;line-height:17px;color:#000;font-weight:400;left:-108.40px;width:900px;text-align:right;transform:scaleX(0.78);transform-origin:right center;-webkit-text-stroke-width:0.35px;">151</div>
<div style="left:795.00px;top:487.53px;width:53.00px;height:20.06px;background:#c2c2c2"></div>
<div class="t" style="top:489.89px;font-size:17px;line-height:17px;color:#000;font-weight:400;left:-56.30px;width:900px;text-align:right;transform:scaleX(0.78);transform-origin:right center;-webkit-text-stroke-width:0.35px;">144</div>
<div style="left:847.00px;top:487.53px;width:54.00px;height:20.06px;background:#bfbfbf"></div>
<div class="t" style="top:489.89px;font-size:17px;line-height:17px;color:#000;font-weight:400;left:-3.60px;width:900px;text-align:right;transform:scaleX(0.78);transform-origin:right center;-webkit-text-stroke-width:0.35px;">136</div>
<div style="left:389.20px;top:368.79px;width:511.20px;height:1.30px;background:#a8a8a8"></div>
<div style="left:516.10px;top:330.28px;width:1.20px;height:39.31px;background:#b8b8b8"></div>
<div style="left:690.40px;top:428.06px;width:53.40px;height:20.46px;border:1.4px solid #8a8a8a;box-sizing:border-box"></div>
<div style="left:516.70px;top:546.50px;width:383.70px;height:19.66px;background:#808080"></div>
<div class="t" style="top:548.41px;font-size:17px;line-height:17px;color:#fff;font-weight:400;left:258.55px;width:900px;text-align:center;transform:scaleX(0.92);transform-origin:center center;-webkit-text-stroke-width:0.5px;">Rev. Growth (Yr 1 - 3)</div>
<div style="left:516.70px;top:566.15px;width:383.70px;height:39.31px;background:#e2efda"></div>
<div style="left:415.60px;top:605.46px;width:101.10px;height:137.59px;background:#e2efda"></div>
<div style="left:389.20px;top:605.46px;width:26.40px;height:137.59px;background:#1f3864"></div>
<div class="t" style="left:302.40px;top:664.40px;width:200px;text-align:center;font-size:17px;line-height:19.72px;color:#fff;font-weight:400;-webkit-text-stroke-width:0.35px;transform:rotate(-90deg) scaleX(0.77);transform-origin:center center">WACC</div>
<div class="t" style="top:568.52px;font-size:17px;line-height:17px;color:#7c7c7c;font-weight:400;left:-335.60px;width:900px;text-align:right;transform:scaleX(0.78);transform-origin:right center;-webkit-text-stroke-width:0.35px;">(30%)</div>
<div class="t" style="top:588.17px;font-size:17px;line-height:17px;color:#000;font-weight:400;left:-335.60px;width:900px;text-align:right;transform:scaleX(0.78);transform-origin:right center;-webkit-text-stroke-width:0.35px;">3.5%</div>
<div class="t" style="top:568.52px;font-size:17px;line-height:17px;color:#7c7c7c;font-weight:400;left:-282.50px;width:900px;text-align:right;transform:scaleX(0.78);transform-origin:right center;-webkit-text-stroke-width:0.35px;">(20%)</div>
<div class="t" style="top:588.17px;font-size:17px;line-height:17px;color:#000;font-weight:400;left:-282.50px;width:900px;text-align:right;transform:scaleX(0.78);transform-origin:right center;-webkit-text-stroke-width:0.35px;">4.0%</div>
<div class="t" style="top:568.52px;font-size:17px;line-height:17px;color:#7c7c7c;font-weight:400;left:-213.30px;width:900px;text-align:right;transform:scaleX(0.78);transform-origin:right center;-webkit-text-stroke-width:0.35px;">(10%)</div>
<div class="t" style="top:588.17px;font-size:17px;line-height:17px;color:#000;font-weight:400;left:-213.30px;width:900px;text-align:right;transform:scaleX(0.78);transform-origin:right center;-webkit-text-stroke-width:0.35px;">4.5%</div>
<div class="t" style="top:568.52px;font-size:17px;line-height:17px;color:#7c7c7c;font-weight:400;left:-160.50px;width:900px;text-align:right;transform:scaleX(0.78);transform-origin:right center;-webkit-text-stroke-width:0.35px;">0%</div>
<div class="t" style="top:588.17px;font-size:17px;line-height:17px;color:#000;font-weight:400;left:-160.50px;width:900px;text-align:right;transform:scaleX(0.78);transform-origin:right center;-webkit-text-stroke-width:0.35px;">5.0%</div>
<div class="t" style="top:568.52px;font-size:17px;line-height:17px;color:#7c7c7c;font-weight:400;left:-108.40px;width:900px;text-align:right;transform:scaleX(0.78);transform-origin:right center;-webkit-text-stroke-width:0.35px;">10%</div>
<div class="t" style="top:588.17px;font-size:17px;line-height:17px;color:#000;font-weight:400;left:-108.40px;width:900px;text-align:right;transform:scaleX(0.78);transform-origin:right center;-webkit-text-stroke-width:0.35px;">5.5%</div>
<div class="t" style="top:568.52px;font-size:17px;line-height:17px;color:#7c7c7c;font-weight:400;left:-56.30px;width:900px;text-align:right;transform:scaleX(0.78);transform-origin:right center;-webkit-text-stroke-width:0.35px;">20%</div>
<div class="t" style="top:588.17px;font-size:17px;line-height:17px;color:#000;font-weight:400;left:-56.30px;width:900px;text-align:right;transform:scaleX(0.78);transform-origin:right center;-webkit-text-stroke-width:0.35px;">6.0%</div>
<div class="t" style="top:568.52px;font-size:17px;line-height:17px;color:#7c7c7c;font-weight:400;left:-3.60px;width:900px;text-align:right;transform:scaleX(0.78);transform-origin:right center;-webkit-text-stroke-width:0.35px;">30%</div>
<div class="t" style="top:588.17px;font-size:17px;line-height:17px;color:#000;font-weight:400;left:-3.60px;width:900px;text-align:right;transform:scaleX(0.78);transform-origin:right center;-webkit-text-stroke-width:0.35px;">6.5%</div>
<div class="t" style="top:607.83px;font-size:17px;line-height:17px;color:#7c7c7c;font-weight:400;left:-439.40px;width:900px;text-align:right;transform:scaleX(0.78);transform-origin:right center;-webkit-text-stroke-width:0.35px;">(30%)</div>
<div class="t" style="top:607.83px;font-size:17px;line-height:17px;color:#000;font-weight:400;left:-387.30px;width:900px;text-align:right;transform:scaleX(0.78);transform-origin:right center;-webkit-text-stroke-width:0.35px;">5.6%</div>
<div style="left:516.00px;top:605.46px;width:53.00px;height:20.06px;background:#87b6e0"></div>
<div class="t" style="top:607.83px;font-size:17px;line-height:17px;color:#000;font-weight:400;left:-335.60px;width:900px;text-align:right;transform:scaleX(0.78);transform-origin:right center;-webkit-text-stroke-width:0.35px;">360</div>
<div style="left:568.00px;top:605.46px;width:54.00px;height:20.06px;background:#80b2de"></div>
<div class="t" style="top:607.83px;font-size:17px;line-height:17px;color:#000;font-weight:400;left:-282.50px;width:900px;text-align:right;transform:scaleX(0.78);transform-origin:right center;-webkit-text-stroke-width:0.35px;">365</div>
<div style="left:621.00px;top:605.46px;width:70.00px;height:20.06px;background:#79addd"></div>
<div class="t" style="top:607.83px;font-size:17px;line-height:17px;color:#000;font-weight:400;left:-213.30px;width:900px;text-align:right;transform:scaleX(0.78);transform-origin:right center;-webkit-text-stroke-width:0.35px;">370</div>
<div style="left:690.00px;top:605.46px;width:54.00px;height:20.06px;background:#71a8db"></div>
<div class="t" style="top:607.83px;font-size:17px;line-height:17px;color:#000;font-weight:400;left:-160.50px;width:900px;text-align:right;transform:scaleX(0.78);transform-origin:right center;-webkit-text-stroke-width:0.35px;">376</div>
<div style="left:743.00px;top:605.46px;width:53.00px;height:20.06px;background:#6aa4d9"></div>
<div class="t" style="top:607.83px;font-size:17px;line-height:17px;color:#000;font-weight:400;left:-108.40px;width:900px;text-align:right;transform:scaleX(0.78);transform-origin:right center;-webkit-text-stroke-width:0.35px;">381</div>
<div style="left:795.00px;top:605.46px;width:53.00px;height:20.06px;background:#629fd7"></div>
<div class="t" style="top:607.83px;font-size:17px;line-height:17px;color:#000;font-weight:400;left:-56.30px;width:900px;text-align:right;transform:scaleX(0.78);transform-origin:right center;-webkit-text-stroke-width:0.35px;">387</div>
<div style="left:847.00px;top:605.46px;width:54.00px;height:20.06px;background:#5b9bd5"></div>
<div class="t" style="top:607.83px;font-size:17px;line-height:17px;color:#000;font-weight:400;left:-3.60px;width:900px;text-align:right;transform:scaleX(0.78);transform-origin:right center;-webkit-text-stroke-width:0.35px;">392</div>
<div class="t" style="top:627.49px;font-size:17px;line-height:17px;color:#7c7c7c;font-weight:400;left:-439.40px;width:900px;text-align:right;transform:scaleX(0.78);transform-origin:right center;-webkit-text-stroke-width:0.35px;">(20%)</div>
<div class="t" style="top:627.49px;font-size:17px;line-height:17px;color:#000;font-weight:400;left:-387.30px;width:900px;text-align:right;transform:scaleX(0.78);transform-origin:right center;-webkit-text-stroke-width:0.35px;">6.4%</div>
<div style="left:516.00px;top:625.12px;width:53.00px;height:20.06px;background:#e1edf7"></div>
<div class="t" style="top:627.49px;font-size:17px;line-height:17px;color:#000;font-weight:400;left:-335.60px;width:900px;text-align:right;transform:scaleX(0.78);transform-origin:right center;-webkit-text-stroke-width:0.35px;">294</div>
<div style="left:568.00px;top:625.12px;width:54.00px;height:20.06px;background:#dceaf6"></div>
<div class="t" style="top:627.49px;font-size:17px;line-height:17px;color:#000;font-weight:400;left:-282.50px;width:900px;text-align:right;transform:scaleX(0.78);transform-origin:right center;-webkit-text-stroke-width:0.35px;">298</div>
<div style="left:621.00px;top:625.12px;width:70.00px;height:20.06px;background:#d7e6f5"></div>
<div class="t" style="top:627.49px;font-size:17px;line-height:17px;color:#000;font-weight:400;left:-213.30px;width:900px;text-align:right;transform:scaleX(0.78);transform-origin:right center;-webkit-text-stroke-width:0.35px;">302</div>
<div style="left:690.00px;top:625.12px;width:54.00px;height:20.06px;background:#d0e2f3"></div>
<div class="t" style="top:627.49px;font-size:17px;line-height:17px;color:#000;font-weight:400;left:-160.50px;width:900px;text-align:right;transform:scaleX(0.78);transform-origin:right center;-webkit-text-stroke-width:0.35px;">307</div>
<div style="left:743.00px;top:625.12px;width:53.00px;height:20.06px;background:#cadff1"></div>
<div class="t" style="top:627.49px;font-size:17px;line-height:17px;color:#000;font-weight:400;left:-108.40px;width:900px;text-align:right;transform:scaleX(0.78);transform-origin:right center;-webkit-text-stroke-width:0.35px;">311</div>
<div style="left:795.00px;top:625.12px;width:53.00px;height:20.06px;background:#c3dbf0"></div>
<div class="t" style="top:627.49px;font-size:17px;line-height:17px;color:#000;font-weight:400;left:-56.30px;width:900px;text-align:right;transform:scaleX(0.78);transform-origin:right center;-webkit-text-stroke-width:0.35px;">316</div>
<div style="left:847.00px;top:625.12px;width:54.00px;height:20.06px;background:#bed7ee"></div>
<div class="t" style="top:627.49px;font-size:17px;line-height:17px;color:#000;font-weight:400;left:-3.60px;width:900px;text-align:right;transform:scaleX(0.78);transform-origin:right center;-webkit-text-stroke-width:0.35px;">320</div>
<div class="t" style="top:647.14px;font-size:17px;line-height:17px;color:#7c7c7c;font-weight:400;left:-439.40px;width:900px;text-align:right;transform:scaleX(0.78);transform-origin:right center;-webkit-text-stroke-width:0.35px;">(10%)</div>
<div class="t" style="top:647.14px;font-size:17px;line-height:17px;color:#000;font-weight:400;left:-387.30px;width:900px;text-align:right;transform:scaleX(0.78);transform-origin:right center;-webkit-text-stroke-width:0.35px;">7.2%</div>
<div style="left:516.00px;top:644.78px;width:53.00px;height:20.06px;background:#f2f2f2"></div>
<div class="t" style="top:647.14px;font-size:17px;line-height:17px;color:#000;font-weight:400;left:-335.60px;width:900px;text-align:right;transform:scaleX(0.78);transform-origin:right center;-webkit-text-stroke-width:0.35px;">248</div>
<div style="left:568.00px;top:644.78px;width:54.00px;height:20.06px;background:#f4f4f4"></div>
<div class="t" style="top:647.14px;font-size:17px;line-height:17px;color:#000;font-weight:400;left:-282.50px;width:900px;text-align:right;transform:scaleX(0.78);transform-origin:right center;-webkit-text-stroke-width:0.35px;">252</div>
<div style="left:621.00px;top:644.78px;width:70.00px;height:20.06px;background:#f6f6f6"></div>
<div class="t" style="top:647.14px;font-size:17px;line-height:17px;color:#000;font-weight:400;left:-213.30px;width:900px;text-align:right;transform:scaleX(0.78);transform-origin:right center;-webkit-text-stroke-width:0.35px;">255</div>
<div style="left:690.00px;top:644.78px;width:54.00px;height:20.06px;background:#f8f8f8"></div>
<div class="t" style="top:647.14px;font-size:17px;line-height:17px;color:#000;font-weight:400;left:-160.50px;width:900px;text-align:right;transform:scaleX(0.78);transform-origin:right center;-webkit-text-stroke-width:0.35px;">259</div>
<div style="left:743.00px;top:644.78px;width:53.00px;height:20.06px;background:#fafafa"></div>
<div class="t" style="top:647.14px;font-size:17px;line-height:17px;color:#000;font-weight:400;left:-108.40px;width:900px;text-align:right;transform:scaleX(0.78);transform-origin:right center;-webkit-text-stroke-width:0.35px;">263</div>
<div style="left:795.00px;top:644.78px;width:53.00px;height:20.06px;background:#fcfcfc"></div>
<div class="t" style="top:647.14px;font-size:17px;line-height:17px;color:#000;font-weight:400;left:-56.30px;width:900px;text-align:right;transform:scaleX(0.78);transform-origin:right center;-webkit-text-stroke-width:0.35px;">266</div>
<div style="left:847.00px;top:644.78px;width:54.00px;height:20.06px;background:#fefefe"></div>
<div class="t" style="top:647.14px;font-size:17px;line-height:17px;color:#000;font-weight:400;left:-3.60px;width:900px;text-align:right;transform:scaleX(0.78);transform-origin:right center;-webkit-text-stroke-width:0.35px;">270</div>
<div class="t" style="top:666.80px;font-size:17px;line-height:17px;color:#7c7c7c;font-weight:400;left:-439.40px;width:900px;text-align:right;transform:scaleX(0.78);transform-origin:right center;-webkit-text-stroke-width:0.35px;">0%</div>
<div class="t" style="top:666.80px;font-size:17px;line-height:17px;color:#000;font-weight:400;left:-387.30px;width:900px;text-align:right;transform:scaleX(0.78);transform-origin:right center;-webkit-text-stroke-width:0.35px;">8.0%</div>
<div style="left:516.00px;top:664.43px;width:53.00px;height:20.06px;background:#e0e0e0"></div>
<div class="t" style="top:666.80px;font-size:17px;line-height:17px;color:#000;font-weight:400;left:-335.60px;width:900px;text-align:right;transform:scaleX(0.78);transform-origin:right center;-webkit-text-stroke-width:0.35px;">215</div>
<div style="left:568.00px;top:664.43px;width:54.00px;height:20.06px;background:#e2e2e2"></div>
<div class="t" style="top:666.80px;font-size:17px;line-height:17px;color:#000;font-weight:400;left:-282.50px;width:900px;text-align:right;transform:scaleX(0.78);transform-origin:right center;-webkit-text-stroke-width:0.35px;">218</div>
<div style="left:621.00px;top:664.43px;width:70.00px;height:20.06px;background:#e3e3e3"></div>
<div class="t" style="top:666.80px;font-size:17px;line-height:17px;color:#000;font-weight:400;left:-213.30px;width:900px;text-align:right;transform:scaleX(0.78);transform-origin:right center;-webkit-text-stroke-width:0.35px;">221</div>
<div style="left:690.00px;top:664.43px;width:54.00px;height:20.06px;background:#e5e5e5"></div>
<div class="t" style="top:666.80px;font-size:17px;line-height:17px;color:#000;font-weight:400;left:-160.50px;width:900px;text-align:right;transform:scaleX(0.78);transform-origin:right center;-webkit-text-stroke-width:0.35px;">224</div>
<div style="left:743.00px;top:664.43px;width:53.00px;height:20.06px;background:#e7e7e7"></div>
<div class="t" style="top:666.80px;font-size:17px;line-height:17px;color:#000;font-weight:400;left:-108.40px;width:900px;text-align:right;transform:scaleX(0.78);transform-origin:right center;-webkit-text-stroke-width:0.35px;">227</div>
<div style="left:795.00px;top:664.43px;width:53.00px;height:20.06px;background:#e8e8e8"></div>
<div class="t" style="top:666.80px;font-size:17px;line-height:17px;color:#000;font-weight:400;left:-56.30px;width:900px;text-align:right;transform:scaleX(0.78);transform-origin:right center;-webkit-text-stroke-width:0.35px;">230</div>
<div style="left:847.00px;top:664.43px;width:54.00px;height:20.06px;background:#eaeaea"></div>
<div class="t" style="top:666.80px;font-size:17px;line-height:17px;color:#000;font-weight:400;left:-3.60px;width:900px;text-align:right;transform:scaleX(0.78);transform-origin:right center;-webkit-text-stroke-width:0.35px;">234</div>
<div class="t" style="top:686.45px;font-size:17px;line-height:17px;color:#7c7c7c;font-weight:400;left:-439.40px;width:900px;text-align:right;transform:scaleX(0.78);transform-origin:right center;-webkit-text-stroke-width:0.35px;">10%</div>
<div class="t" style="top:686.45px;font-size:17px;line-height:17px;color:#000;font-weight:400;left:-387.30px;width:900px;text-align:right;transform:scaleX(0.78);transform-origin:right center;-webkit-text-stroke-width:0.35px;">8.8%</div>
<div style="left:516.00px;top:684.09px;width:53.00px;height:20.06px;background:#d2d2d2"></div>
<div class="t" style="top:686.45px;font-size:17px;line-height:17px;color:#000;font-weight:400;left:-335.60px;width:900px;text-align:right;transform:scaleX(0.78);transform-origin:right center;-webkit-text-stroke-width:0.35px;">189</div>
<div style="left:568.00px;top:684.09px;width:54.00px;height:20.06px;background:#d4d4d4"></div>
<div class="t" style="top:686.45px;font-size:17px;line-height:17px;color:#000;font-weight:400;left:-282.50px;width:900px;text-align:right;transform:scaleX(0.78);transform-origin:right center;-webkit-text-stroke-width:0.35px;">192</div>
<div style="left:621.00px;top:684.09px;width:70.00px;height:20.06px;background:#d5d5d5"></div>
<div class="t" style="top:686.45px;font-size:17px;line-height:17px;color:#000;font-weight:400;left:-213.30px;width:900px;text-align:right;transform:scaleX(0.78);transform-origin:right center;-webkit-text-stroke-width:0.35px;">195</div>
<div style="left:690.00px;top:684.09px;width:54.00px;height:20.06px;background:#d7d7d7"></div>
<div class="t" style="top:686.45px;font-size:17px;line-height:17px;color:#000;font-weight:400;left:-160.50px;width:900px;text-align:right;transform:scaleX(0.78);transform-origin:right center;-webkit-text-stroke-width:0.35px;">197</div>
<div style="left:743.00px;top:684.09px;width:53.00px;height:20.06px;background:#d8d8d8"></div>
<div class="t" style="top:686.45px;font-size:17px;line-height:17px;color:#000;font-weight:400;left:-108.40px;width:900px;text-align:right;transform:scaleX(0.78);transform-origin:right center;-webkit-text-stroke-width:0.35px;">200</div>
<div style="left:795.00px;top:684.09px;width:53.00px;height:20.06px;background:#dadada"></div>
<div class="t" style="top:686.45px;font-size:17px;line-height:17px;color:#000;font-weight:400;left:-56.30px;width:900px;text-align:right;transform:scaleX(0.78);transform-origin:right center;-webkit-text-stroke-width:0.35px;">203</div>
<div style="left:847.00px;top:684.09px;width:54.00px;height:20.06px;background:#dbdbdb"></div>
<div class="t" style="top:686.45px;font-size:17px;line-height:17px;color:#000;font-weight:400;left:-3.60px;width:900px;text-align:right;transform:scaleX(0.78);transform-origin:right center;-webkit-text-stroke-width:0.35px;">206</div>
<div class="t" style="top:706.11px;font-size:17px;line-height:17px;color:#7c7c7c;font-weight:400;left:-439.40px;width:900px;text-align:right;transform:scaleX(0.78);transform-origin:right center;-webkit-text-stroke-width:0.35px;">20%</div>
<div class="t" style="top:706.11px;font-size:17px;line-height:17px;color:#000;font-weight:400;left:-387.30px;width:900px;text-align:right;transform:scaleX(0.78);transform-origin:right center;-webkit-text-stroke-width:0.35px;">9.6%</div>
<div style="left:516.00px;top:703.74px;width:53.00px;height:20.06px;background:#c8c8c8"></div>
<div class="t" style="top:706.11px;font-size:17px;line-height:17px;color:#000;font-weight:400;left:-335.60px;width:900px;text-align:right;transform:scaleX(0.78);transform-origin:right center;-webkit-text-stroke-width:0.35px;">169</div>
<div style="left:568.00px;top:703.74px;width:54.00px;height:20.06px;background:#c9c9c9"></div>
<div class="t" style="top:706.11px;font-size:17px;line-height:17px;color:#000;font-weight:400;left:-282.50px;width:900px;text-align:right;transform:scaleX(0.78);transform-origin:right center;-webkit-text-stroke-width:0.35px;">172</div>
<div style="left:621.00px;top:703.74px;width:70.00px;height:20.06px;background:#cacaca"></div>
<div class="t" style="top:706.11px;font-size:17px;line-height:17px;color:#000;font-weight:400;left:-213.30px;width:900px;text-align:right;transform:scaleX(0.78);transform-origin:right center;-webkit-text-stroke-width:0.35px;">174</div>
<div style="left:690.00px;top:703.74px;width:54.00px;height:20.06px;background:#cbcbcb"></div>
<div class="t" style="top:706.11px;font-size:17px;line-height:17px;color:#000;font-weight:400;left:-160.50px;width:900px;text-align:right;transform:scaleX(0.78);transform-origin:right center;-webkit-text-stroke-width:0.35px;">176</div>
<div style="left:743.00px;top:703.74px;width:53.00px;height:20.06px;background:#cdcdcd"></div>
<div class="t" style="top:706.11px;font-size:17px;line-height:17px;color:#000;font-weight:400;left:-108.40px;width:900px;text-align:right;transform:scaleX(0.78);transform-origin:right center;-webkit-text-stroke-width:0.35px;">179</div>
<div style="left:795.00px;top:703.74px;width:53.00px;height:20.06px;background:#cecece"></div>
<div class="t" style="top:706.11px;font-size:17px;line-height:17px;color:#000;font-weight:400;left:-56.30px;width:900px;text-align:right;transform:scaleX(0.78);transform-origin:right center;-webkit-text-stroke-width:0.35px;">181</div>
<div style="left:847.00px;top:703.74px;width:54.00px;height:20.06px;background:#d0d0d0"></div>
<div class="t" style="top:706.11px;font-size:17px;line-height:17px;color:#000;font-weight:400;left:-3.60px;width:900px;text-align:right;transform:scaleX(0.78);transform-origin:right center;-webkit-text-stroke-width:0.35px;">184</div>
<div class="t" style="top:725.77px;font-size:17px;line-height:17px;color:#7c7c7c;font-weight:400;left:-439.40px;width:900px;text-align:right;transform:scaleX(0.78);transform-origin:right center;-webkit-text-stroke-width:0.35px;">30%</div>
<div class="t" style="top:725.77px;font-size:17px;line-height:17px;color:#000;font-weight:400;left:-387.30px;width:900px;text-align:right;transform:scaleX(0.78);transform-origin:right center;-webkit-text-stroke-width:0.35px;">10.4%</div>
<div style="left:516.00px;top:723.40px;width:53.00px;height:20.06px;background:#bfbfbf"></div>
<div class="t" style="top:725.77px;font-size:17px;line-height:17px;color:#000;font-weight:400;left:-335.60px;width:900px;text-align:right;transform:scaleX(0.78);transform-origin:right center;-webkit-text-stroke-width:0.35px;">153</div>
<div style="left:568.00px;top:723.40px;width:54.00px;height:20.06px;background:#c0c0c0"></div>
<div class="t" style="top:725.77px;font-size:17px;line-height:17px;color:#000;font-weight:400;left:-282.50px;width:900px;text-align:right;transform:scaleX(0.78);transform-origin:right center;-webkit-text-stroke-width:0.35px;">155</div>
<div style="left:621.00px;top:723.40px;width:70.00px;height:20.06px;background:#c1c1c1"></div>
<div class="t" style="top:725.77px;font-size:17px;line-height:17px;color:#000;font-weight:400;left:-213.30px;width:900px;text-align:right;transform:scaleX(0.78);transform-origin:right center;-webkit-text-stroke-width:0.35px;">157</div>
<div style="left:690.00px;top:723.40px;width:54.00px;height:20.06px;background:#c2c2c2"></div>
<div class="t" style="top:725.77px;font-size:17px;line-height:17px;color:#000;font-weight:400;left:-160.50px;width:900px;text-align:right;transform:scaleX(0.78);transform-origin:right center;-webkit-text-stroke-width:0.35px;">159</div>
<div style="left:743.00px;top:723.40px;width:53.00px;height:20.06px;background:#c3c3c3"></div>
<div class="t" style="top:725.77px;font-size:17px;line-height:17px;color:#000;font-weight:400;left:-108.40px;width:900px;text-align:right;transform:scaleX(0.78);transform-origin:right center;-webkit-text-stroke-width:0.35px;">161</div>
<div style="left:795.00px;top:723.40px;width:53.00px;height:20.06px;background:#c5c5c5"></div>
<div class="t" style="top:725.77px;font-size:17px;line-height:17px;color:#000;font-weight:400;left:-56.30px;width:900px;text-align:right;transform:scaleX(0.78);transform-origin:right center;-webkit-text-stroke-width:0.35px;">164</div>
<div style="left:847.00px;top:723.40px;width:54.00px;height:20.06px;background:#c6c6c6"></div>
<div class="t" style="top:725.77px;font-size:17px;line-height:17px;color:#000;font-weight:400;left:-3.60px;width:900px;text-align:right;transform:scaleX(0.78);transform-origin:right center;-webkit-text-stroke-width:0.35px;">166</div>
<div style="left:389.20px;top:604.66px;width:511.20px;height:1.30px;background:#a8a8a8"></div>
<div style="left:516.10px;top:566.15px;width:1.20px;height:39.31px;background:#b8b8b8"></div>
<div style="left:690.40px;top:663.93px;width:53.40px;height:20.46px;border:1.4px solid #8a8a8a;box-sizing:border-box"></div>
<div style="left:1110.00px;top:310.62px;width:366.70px;height:19.66px;background:#808080"></div>
<div class="t" style="top:312.54px;font-size:17px;line-height:17px;color:#fff;font-weight:400;left:843.35px;width:900px;text-align:center;transform:scaleX(0.92);transform-origin:center center;-webkit-text-stroke-width:0.5px;">Tax Rate</div>
<div style="left:1110.00px;top:330.28px;width:366.70px;height:39.31px;background:#e2efda"></div>
<div style="left:1018.00px;top:369.59px;width:92.00px;height:137.59px;background:#e2efda"></div>
<div style="left:992.00px;top:369.59px;width:26.00px;height:137.59px;background:#1f3864"></div>
<div class="t" style="left:905.00px;top:428.53px;width:200px;text-align:center;font-size:17px;line-height:19.72px;color:#fff;font-weight:400;-webkit-text-stroke-width:0.35px;transform:rotate(-90deg) scaleX(0.955);transform-origin:center center">Terminal Growth</div>
<div class="t" style="top:332.65px;font-size:17px;line-height:17px;color:#7c7c7c;font-weight:400;left:258.50px;width:900px;text-align:right;transform:scaleX(0.78);transform-origin:right center;-webkit-text-stroke-width:0.35px;">(30%)</div>
<div class="t" style="top:352.30px;font-size:17px;line-height:17px;color:#000;font-weight:400;left:258.50px;width:900px;text-align:right;transform:scaleX(0.78);transform-origin:right center;-webkit-text-stroke-width:0.35px;">21.0%</div>
<div class="t" style="top:332.65px;font-size:17px;line-height:17px;color:#7c7c7c;font-weight:400;left:310.60px;width:900px;text-align:right;transform:scaleX(0.78);transform-origin:right center;-webkit-text-stroke-width:0.35px;">(20%)</div>
<div class="t" style="top:352.30px;font-size:17px;line-height:17px;color:#000;font-weight:400;left:310.60px;width:900px;text-align:right;transform:scaleX(0.78);transform-origin:right center;-webkit-text-stroke-width:0.35px;">24.0%</div>
<div class="t" style="top:332.65px;font-size:17px;line-height:17px;color:#7c7c7c;font-weight:400;left:363.30px;width:900px;text-align:right;transform:scaleX(0.78);transform-origin:right center;-webkit-text-stroke-width:0.35px;">(10%)</div>
<div class="t" style="top:352.30px;font-size:17px;line-height:17px;color:#000;font-weight:400;left:363.30px;width:900px;text-align:right;transform:scaleX(0.78);transform-origin:right center;-webkit-text-stroke-width:0.35px;">27.0%</div>
<div class="t" style="top:332.65px;font-size:17px;line-height:17px;color:#7c7c7c;font-weight:400;left:415.40px;width:900px;text-align:right;transform:scaleX(0.78);transform-origin:right center;-webkit-text-stroke-width:0.35px;">0%</div>
<div class="t" style="top:352.30px;font-size:17px;line-height:17px;color:#000;font-weight:400;left:415.40px;width:900px;text-align:right;transform:scaleX(0.78);transform-origin:right center;-webkit-text-stroke-width:0.35px;">30.0%</div>
<div class="t" style="top:332.65px;font-size:17px;line-height:17px;color:#7c7c7c;font-weight:400;left:467.90px;width:900px;text-align:right;transform:scaleX(0.78);transform-origin:right center;-webkit-text-stroke-width:0.35px;">10%</div>
<div class="t" style="top:352.30px;font-size:17px;line-height:17px;color:#000;font-weight:400;left:467.90px;width:900px;text-align:right;transform:scaleX(0.78);transform-origin:right center;-webkit-text-stroke-width:0.35px;">33.0%</div>
<div class="t" style="top:332.65px;font-size:17px;line-height:17px;color:#7c7c7c;font-weight:400;left:520.20px;width:900px;text-align:right;transform:scaleX(0.78);transform-origin:right center;-webkit-text-stroke-width:0.35px;">20%</div>
<div class="t" style="top:352.30px;font-size:17px;line-height:17px;color:#000;font-weight:400;left:520.20px;width:900px;text-align:right;transform:scaleX(0.78);transform-origin:right center;-webkit-text-stroke-width:0.35px;">36.0%</div>
<div class="t" style="top:332.65px;font-size:17px;line-height:17px;color:#7c7c7c;font-weight:400;left:572.70px;width:900px;text-align:right;transform:scaleX(0.78);transform-origin:right center;-webkit-text-stroke-width:0.35px;">30%</div>
<div class="t" style="top:352.30px;font-size:17px;line-height:17px;color:#000;font-weight:400;left:572.70px;width:900px;text-align:right;transform:scaleX(0.78);transform-origin:right center;-webkit-text-stroke-width:0.35px;">39.0%</div>
<div class="t" style="top:371.96px;font-size:17px;line-height:17px;color:#7c7c7c;font-weight:400;left:163.00px;width:900px;text-align:right;transform:scaleX(0.78);transform-origin:right center;-webkit-text-stroke-width:0.35px;">(30%)</div>
<div class="t" style="top:371.96px;font-size:17px;line-height:17px;color:#000;font-weight:400;left:206.00px;width:900px;text-align:right;transform:scaleX(0.78);transform-origin:right center;-webkit-text-stroke-width:0.35px;">1.4%</div>
<div style="left:1110.00px;top:369.59px;width:53.00px;height:20.06px;background:#e1edf7"></div>
<div class="t" style="top:371.96px;font-size:17px;line-height:17px;color:#000;font-weight:400;left:258.50px;width:900px;text-align:right;transform:scaleX(0.78);transform-origin:right center;-webkit-text-stroke-width:0.35px;">238</div>
<div style="left:1162.00px;top:369.59px;width:53.00px;height:20.06px;background:#fefefe"></div>
<div class="t" style="top:371.96px;font-size:17px;line-height:17px;color:#000;font-weight:400;left:310.60px;width:900px;text-align:right;transform:scaleX(0.78);transform-origin:right center;-webkit-text-stroke-width:0.35px;">228</div>
<div style="left:1214.00px;top:369.59px;width:54.00px;height:20.06px;background:#f2f2f2"></div>
<div class="t" style="top:371.96px;font-size:17px;line-height:17px;color:#000;font-weight:400;left:363.30px;width:900px;text-align:right;transform:scaleX(0.78);transform-origin:right center;-webkit-text-stroke-width:0.35px;">218</div>
<div style="left:1267.00px;top:369.59px;width:53.00px;height:20.06px;background:#e6e6e6"></div>
<div class="t" style="top:371.96px;font-size:17px;line-height:17px;color:#000;font-weight:400;left:415.40px;width:900px;text-align:right;transform:scaleX(0.78);transform-origin:right center;-webkit-text-stroke-width:0.35px;">208</div>
<div style="left:1319.00px;top:369.59px;width:53.00px;height:20.06px;background:#d9d9d9"></div>
<div class="t" style="top:371.96px;font-size:17px;line-height:17px;color:#000;font-weight:400;left:467.90px;width:900px;text-align:right;transform:scaleX(0.78);transform-origin:right center;-webkit-text-stroke-width:0.35px;">198</div>
<div style="left:1371.00px;top:369.59px;width:54.00px;height:20.06px;background:#cbcbcb"></div>
<div class="t" style="top:371.96px;font-size:17px;line-height:17px;color:#000;font-weight:400;left:520.20px;width:900px;text-align:right;transform:scaleX(0.78);transform-origin:right center;-webkit-text-stroke-width:0.35px;">187</div>
<div style="left:1424.00px;top:369.59px;width:53.00px;height:20.06px;background:#bfbfbf"></div>
<div class="t" style="top:371.96px;font-size:17px;line-height:17px;color:#000;font-weight:400;left:572.70px;width:900px;text-align:right;transform:scaleX(0.78);transform-origin:right center;-webkit-text-stroke-width:0.35px;">177</div>
<div class="t" style="top:391.61px;font-size:17px;line-height:17px;color:#7c7c7c;font-weight:400;left:163.00px;width:900px;text-align:right;transform:scaleX(0.78);transform-origin:right center;-webkit-text-stroke-width:0.35px;">(20%)</div>
<div class="t" style="top:391.61px;font-size:17px;line-height:17px;color:#000;font-weight:400;left:206.00px;width:900px;text-align:right;transform:scaleX(0.78);transform-origin:right center;-webkit-text-stroke-width:0.35px;">1.6%</div>
<div style="left:1110.00px;top:389.25px;width:53.00px;height:20.06px;background:#cee1f2"></div>
<div class="t" style="top:391.61px;font-size:17px;line-height:17px;color:#000;font-weight:400;left:258.50px;width:900px;text-align:right;transform:scaleX(0.78);transform-origin:right center;-webkit-text-stroke-width:0.35px;">244</div>
<div style="left:1162.00px;top:389.25px;width:53.00px;height:20.06px;background:#edf4fb"></div>
<div class="t" style="top:391.61px;font-size:17px;line-height:17px;color:#000;font-weight:400;left:310.60px;width:900px;text-align:right;transform:scaleX(0.78);transform-origin:right center;-webkit-text-stroke-width:0.35px;">234</div>
<div style="left:1214.00px;top:389.25px;width:54.00px;height:20.06px;background:#f8f8f8"></div>
<div class="t" style="top:391.61px;font-size:17px;line-height:17px;color:#000;font-weight:400;left:363.30px;width:900px;text-align:right;transform:scaleX(0.78);transform-origin:right center;-webkit-text-stroke-width:0.35px;">223</div>
<div style="left:1267.00px;top:389.25px;width:53.00px;height:20.06px;background:#ececec"></div>
<div class="t" style="top:391.61px;font-size:17px;line-height:17px;color:#000;font-weight:400;left:415.40px;width:900px;text-align:right;transform:scaleX(0.78);transform-origin:right center;-webkit-text-stroke-width:0.35px;">213</div>
<div style="left:1319.00px;top:389.25px;width:53.00px;height:20.06px;background:#dedede"></div>
<div class="t" style="top:391.61px;font-size:17px;line-height:17px;color:#000;font-weight:400;left:467.90px;width:900px;text-align:right;transform:scaleX(0.78);transform-origin:right center;-webkit-text-stroke-width:0.35px;">202</div>
<div style="left:1371.00px;top:389.25px;width:54.00px;height:20.06px;background:#d2d2d2"></div>
<div class="t" style="top:391.61px;font-size:17px;line-height:17px;color:#000;font-weight:400;left:520.20px;width:900px;text-align:right;transform:scaleX(0.78);transform-origin:right center;-webkit-text-stroke-width:0.35px;">192</div>
<div style="left:1424.00px;top:389.25px;width:53.00px;height:20.06px;background:#c5c5c5"></div>
<div class="t" style="top:391.61px;font-size:17px;line-height:17px;color:#000;font-weight:400;left:572.70px;width:900px;text-align:right;transform:scaleX(0.78);transform-origin:right center;-webkit-text-stroke-width:0.35px;">182</div>
<div class="t" style="top:411.27px;font-size:17px;line-height:17px;color:#7c7c7c;font-weight:400;left:163.00px;width:900px;text-align:right;transform:scaleX(0.78);transform-origin:right center;-webkit-text-stroke-width:0.35px;">(10%)</div>
<div class="t" style="top:411.27px;font-size:17px;line-height:17px;color:#000;font-weight:400;left:206.00px;width:900px;text-align:right;transform:scaleX(0.78);transform-origin:right center;-webkit-text-stroke-width:0.35px;">1.8%</div>
<div style="left:1110.00px;top:408.90px;width:53.00px;height:20.06px;background:#bbd5ed"></div>
<div class="t" style="top:411.27px;font-size:17px;line-height:17px;color:#000;font-weight:400;left:258.50px;width:900px;text-align:right;transform:scaleX(0.78);transform-origin:right center;-webkit-text-stroke-width:0.35px;">250</div>
<div style="left:1162.00px;top:408.90px;width:53.00px;height:20.06px;background:#dae9f6"></div>
<div class="t" style="top:411.27px;font-size:17px;line-height:17px;color:#000;font-weight:400;left:310.60px;width:900px;text-align:right;transform:scaleX(0.78);transform-origin:right center;-webkit-text-stroke-width:0.35px;">240</div>
<div style="left:1214.00px;top:408.90px;width:54.00px;height:20.06px;background:#fdfeff"></div>
<div class="t" style="top:411.27px;font-size:17px;line-height:17px;color:#000;font-weight:400;left:363.30px;width:900px;text-align:right;transform:scaleX(0.78);transform-origin:right center;-webkit-text-stroke-width:0.35px;">229</div>
<div style="left:1267.00px;top:408.90px;width:53.00px;height:20.06px;background:#f2f2f2"></div>
<div class="t" style="top:411.27px;font-size:17px;line-height:17px;color:#000;font-weight:400;left:415.40px;width:900px;text-align:right;transform:scaleX(0.78);transform-origin:right center;-webkit-text-stroke-width:0.35px;">218</div>
<div style="left:1319.00px;top:408.90px;width:53.00px;height:20.06px;background:#e6e6e6"></div>
<div class="t" style="top:411.27px;font-size:17px;line-height:17px;color:#000;font-weight:400;left:467.90px;width:900px;text-align:right;transform:scaleX(0.78);transform-origin:right center;-webkit-text-stroke-width:0.35px;">208</div>
<div style="left:1371.00px;top:408.90px;width:54.00px;height:20.06px;background:#d8d8d8"></div>
<div class="t" style="top:411.27px;font-size:17px;line-height:17px;color:#000;font-weight:400;left:520.20px;width:900px;text-align:right;transform:scaleX(0.78);transform-origin:right center;-webkit-text-stroke-width:0.35px;">197</div>
<div style="left:1424.00px;top:408.90px;width:53.00px;height:20.06px;background:#cacaca"></div>
<div class="t" style="top:411.27px;font-size:17px;line-height:17px;color:#000;font-weight:400;left:572.70px;width:900px;text-align:right;transform:scaleX(0.78);transform-origin:right center;-webkit-text-stroke-width:0.35px;">186</div>
<div class="t" style="top:430.93px;font-size:17px;line-height:17px;color:#7c7c7c;font-weight:400;left:163.00px;width:900px;text-align:right;transform:scaleX(0.78);transform-origin:right center;-webkit-text-stroke-width:0.35px;">0%</div>
<div class="t" style="top:430.93px;font-size:17px;line-height:17px;color:#000;font-weight:400;left:206.00px;width:900px;text-align:right;transform:scaleX(0.78);transform-origin:right center;-webkit-text-stroke-width:0.35px;">2.0%</div>
<div style="left:1110.00px;top:428.56px;width:53.00px;height:20.06px;background:#a4c8e8"></div>
<div class="t" style="top:430.93px;font-size:17px;line-height:17px;color:#000;font-weight:400;left:258.50px;width:900px;text-align:right;transform:scaleX(0.78);transform-origin:right center;-webkit-text-stroke-width:0.35px;">257</div>
<div style="left:1162.00px;top:428.56px;width:53.00px;height:20.06px;background:#c7ddf1"></div>
<div class="t" style="top:430.93px;font-size:17px;line-height:17px;color:#000;font-weight:400;left:310.60px;width:900px;text-align:right;transform:scaleX(0.78);transform-origin:right center;-webkit-text-stroke-width:0.35px;">246</div>
<div style="left:1214.00px;top:428.56px;width:54.00px;height:20.06px;background:#eaf2fa"></div>
<div class="t" style="top:430.93px;font-size:17px;line-height:17px;color:#000;font-weight:400;left:363.30px;width:900px;text-align:right;transform:scaleX(0.78);transform-origin:right center;-webkit-text-stroke-width:0.35px;">235</div>
<div style="left:1267.00px;top:428.56px;width:53.00px;height:20.06px;background:#f9f9f9"></div>
<div class="t" style="top:430.93px;font-size:17px;line-height:17px;color:#000;font-weight:400;left:415.40px;width:900px;text-align:right;transform:scaleX(0.78);transform-origin:right center;-webkit-text-stroke-width:0.35px;">224</div>
<div style="left:1319.00px;top:428.56px;width:53.00px;height:20.06px;background:#ececec"></div>
<div class="t" style="top:430.93px;font-size:17px;line-height:17px;color:#000;font-weight:400;left:467.90px;width:900px;text-align:right;transform:scaleX(0.78);transform-origin:right center;-webkit-text-stroke-width:0.35px;">213</div>
<div style="left:1371.00px;top:428.56px;width:54.00px;height:20.06px;background:#dedede"></div>
<div class="t" style="top:430.93px;font-size:17px;line-height:17px;color:#000;font-weight:400;left:520.20px;width:900px;text-align:right;transform:scaleX(0.78);transform-origin:right center;-webkit-text-stroke-width:0.35px;">202</div>
<div style="left:1424.00px;top:428.56px;width:53.00px;height:20.06px;background:#d0d0d0"></div>
<div class="t" style="top:430.93px;font-size:17px;line-height:17px;color:#000;font-weight:400;left:572.70px;width:900px;text-align:right;transform:scaleX(0.78);transform-origin:right center;-webkit-text-stroke-width:0.35px;">191</div>
<div class="t" style="top:450.58px;font-size:17px;line-height:17px;color:#7c7c7c;font-weight:400;left:163.00px;width:900px;text-align:right;transform:scaleX(0.78);transform-origin:right center;-webkit-text-stroke-width:0.35px;">10%</div>
<div class="t" style="top:450.58px;font-size:17px;line-height:17px;color:#000;font-weight:400;left:206.00px;width:900px;text-align:right;transform:scaleX(0.78);transform-origin:right center;-webkit-text-stroke-width:0.35px;">2.2%</div>
<div style="left:1110.00px;top:448.22px;width:53.00px;height:20.06px;background:#8ebae2"></div>
<div class="t" style="top:450.58px;font-size:17px;line-height:17px;color:#000;font-weight:400;left:258.50px;width:900px;text-align:right;transform:scaleX(0.78);transform-origin:right center;-webkit-text-stroke-width:0.35px;">264</div>
<div style="left:1162.00px;top:448.22px;width:53.00px;height:20.06px;background:#b1cfeb"></div>
<div class="t" style="top:450.58px;font-size:17px;line-height:17px;color:#000;font-weight:400;left:310.60px;width:900px;text-align:right;transform:scaleX(0.78);transform-origin:right center;-webkit-text-stroke-width:0.35px;">253</div>
<div style="left:1214.00px;top:448.22px;width:54.00px;height:20.06px;background:#d4e5f4"></div>
<div class="t" style="top:450.58px;font-size:17px;line-height:17px;color:#000;font-weight:400;left:363.30px;width:900px;text-align:right;transform:scaleX(0.78);transform-origin:right center;-webkit-text-stroke-width:0.35px;">242</div>
<div style="left:1267.00px;top:448.22px;width:53.00px;height:20.06px;background:#fafcfe"></div>
<div class="t" style="top:450.58px;font-size:17px;line-height:17px;color:#000;font-weight:400;left:415.40px;width:900px;text-align:right;transform:scaleX(0.78);transform-origin:right center;-webkit-text-stroke-width:0.35px;">230</div>
<div style="left:1319.00px;top:448.22px;width:53.00px;height:20.06px;background:#f3f3f3"></div>
<div class="t" style="top:450.58px;font-size:17px;line-height:17px;color:#000;font-weight:400;left:467.90px;width:900px;text-align:right;transform:scaleX(0.78);transform-origin:right center;-webkit-text-stroke-width:0.35px;">219</div>
<div style="left:1371.00px;top:448.22px;width:54.00px;height:20.06px;background:#e6e6e6"></div>
<div class="t" style="top:450.58px;font-size:17px;line-height:17px;color:#000;font-weight:400;left:520.20px;width:900px;text-align:right;transform:scaleX(0.78);transform-origin:right center;-webkit-text-stroke-width:0.35px;">208</div>
<div style="left:1424.00px;top:448.22px;width:53.00px;height:20.06px;background:#d8d8d8"></div>
<div class="t" style="top:450.58px;font-size:17px;line-height:17px;color:#000;font-weight:400;left:572.70px;width:900px;text-align:right;transform:scaleX(0.78);transform-origin:right center;-webkit-text-stroke-width:0.35px;">197</div>
<div class="t" style="top:470.24px;font-size:17px;line-height:17px;color:#7c7c7c;font-weight:400;left:163.00px;width:900px;text-align:right;transform:scaleX(0.78);transform-origin:right center;-webkit-text-stroke-width:0.35px;">20%</div>
<div class="t" style="top:470.24px;font-size:17px;line-height:17px;color:#000;font-weight:400;left:206.00px;width:900px;text-align:right;transform:scaleX(0.78);transform-origin:right center;-webkit-text-stroke-width:0.35px;">2.4%</div>
<div style="left:1110.00px;top:467.87px;width:53.00px;height:20.06px;background:#74abdc"></div>
<div class="t" style="top:470.24px;font-size:17px;line-height:17px;color:#000;font-weight:400;left:258.50px;width:900px;text-align:right;transform:scaleX(0.78);transform-origin:right center;-webkit-text-stroke-width:0.35px;">272</div>
<div style="left:1162.00px;top:467.87px;width:53.00px;height:20.06px;background:#9bc2e5"></div>
<div class="t" style="top:470.24px;font-size:17px;line-height:17px;color:#000;font-weight:400;left:310.60px;width:900px;text-align:right;transform:scaleX(0.78);transform-origin:right center;-webkit-text-stroke-width:0.35px;">260</div>
<div style="left:1214.00px;top:467.87px;width:54.00px;height:20.06px;background:#bed7ee"></div>
<div class="t" style="top:470.24px;font-size:17px;line-height:17px;color:#000;font-weight:400;left:363.30px;width:900px;text-align:right;transform:scaleX(0.78);transform-origin:right center;-webkit-text-stroke-width:0.35px;">249</div>
<div style="left:1267.00px;top:467.87px;width:53.00px;height:20.06px;background:#e4eef8"></div>
<div class="t" style="top:470.24px;font-size:17px;line-height:17px;color:#000;font-weight:400;left:415.40px;width:900px;text-align:right;transform:scaleX(0.78);transform-origin:right center;-webkit-text-stroke-width:0.35px;">237</div>
<div style="left:1319.00px;top:467.87px;width:53.00px;height:20.06px;background:#fbfbfb"></div>
<div class="t" style="top:470.24px;font-size:17px;line-height:17px;color:#000;font-weight:400;left:467.90px;width:900px;text-align:right;transform:scaleX(0.78);transform-origin:right center;-webkit-text-stroke-width:0.35px;">225</div>
<div style="left:1371.00px;top:467.87px;width:54.00px;height:20.06px;background:#ededed"></div>
<div class="t" style="top:470.24px;font-size:17px;line-height:17px;color:#000;font-weight:400;left:520.20px;width:900px;text-align:right;transform:scaleX(0.78);transform-origin:right center;-webkit-text-stroke-width:0.35px;">214</div>
<div style="left:1424.00px;top:467.87px;width:53.00px;height:20.06px;background:#dedede"></div>
<div class="t" style="top:470.24px;font-size:17px;line-height:17px;color:#000;font-weight:400;left:572.70px;width:900px;text-align:right;transform:scaleX(0.78);transform-origin:right center;-webkit-text-stroke-width:0.35px;">202</div>
<div class="t" style="top:489.89px;font-size:17px;line-height:17px;color:#7c7c7c;font-weight:400;left:163.00px;width:900px;text-align:right;transform:scaleX(0.78);transform-origin:right center;-webkit-text-stroke-width:0.35px;">30%</div>
<div class="t" style="top:489.89px;font-size:17px;line-height:17px;color:#000;font-weight:400;left:206.00px;width:900px;text-align:right;transform:scaleX(0.78);transform-origin:right center;-webkit-text-stroke-width:0.35px;">2.6%</div>
<div style="left:1110.00px;top:487.53px;width:53.00px;height:20.06px;background:#5b9bd5"></div>
<div class="t" style="top:489.89px;font-size:17px;line-height:17px;color:#000;font-weight:400;left:258.50px;width:900px;text-align:right;transform:scaleX(0.78);transform-origin:right center;-webkit-text-stroke-width:0.35px;">280</div>
<div style="left:1162.00px;top:487.53px;width:53.00px;height:20.06px;background:#81b2df"></div>
<div class="t" style="top:489.89px;font-size:17px;line-height:17px;color:#000;font-weight:400;left:310.60px;width:900px;text-align:right;transform:scaleX(0.78);transform-origin:right center;-webkit-text-stroke-width:0.35px;">268</div>
<div style="left:1214.00px;top:487.53px;width:54.00px;height:20.06px;background:#a7cae9"></div>
<div class="t" style="top:489.89px;font-size:17px;line-height:17px;color:#000;font-weight:400;left:363.30px;width:900px;text-align:right;transform:scaleX(0.78);transform-origin:right center;-webkit-text-stroke-width:0.35px;">256</div>
<div style="left:1267.00px;top:487.53px;width:53.00px;height:20.06px;background:#cee1f2"></div>
<div class="t" style="top:489.89px;font-size:17px;line-height:17px;color:#000;font-weight:400;left:415.40px;width:900px;text-align:right;transform:scaleX(0.78);transform-origin:right center;-webkit-text-stroke-width:0.35px;">244</div>
<div style="left:1319.00px;top:487.53px;width:53.00px;height:20.06px;background:#f4f8fc"></div>
<div class="t" style="top:489.89px;font-size:17px;line-height:17px;color:#000;font-weight:400;left:467.90px;width:900px;text-align:right;transform:scaleX(0.78);transform-origin:right center;-webkit-text-stroke-width:0.35px;">232</div>
<div style="left:1371.00px;top:487.53px;width:54.00px;height:20.06px;background:#f4f4f4"></div>
<div class="t" style="top:489.89px;font-size:17px;line-height:17px;color:#000;font-weight:400;left:520.20px;width:900px;text-align:right;transform:scaleX(0.78);transform-origin:right center;-webkit-text-stroke-width:0.35px;">220</div>
<div style="left:1424.00px;top:487.53px;width:53.00px;height:20.06px;background:#e6e6e6"></div>
<div class="t" style="top:489.89px;font-size:17px;line-height:17px;color:#000;font-weight:400;left:572.70px;width:900px;text-align:right;transform:scaleX(0.78);transform-origin:right center;-webkit-text-stroke-width:0.35px;">208</div>
<div style="left:992.00px;top:368.79px;width:484.70px;height:1.30px;background:#a8a8a8"></div>
<div style="left:1109.40px;top:330.28px;width:1.20px;height:39.31px;background:#b8b8b8"></div>
<div style="left:1267.00px;top:428.06px;width:52.70px;height:20.46px;border:1.4px solid #8a8a8a;box-sizing:border-box"></div>
<div style="left:1110.00px;top:546.50px;width:366.70px;height:19.66px;background:#808080"></div>
<div class="t" style="top:548.41px;font-size:17px;line-height:17px;color:#fff;font-weight:400;left:843.35px;width:900px;text-align:center;transform:scaleX(0.92);transform-origin:center center;-webkit-text-stroke-width:0.5px;">Rev. Growth (Yr 1 - 3)</div>
<div style="left:1110.00px;top:566.15px;width:366.70px;height:39.31px;background:#e2efda"></div>
<div style="left:1018.00px;top:605.46px;width:92.00px;height:137.59px;background:#e2efda"></div>
<div style="left:992.00px;top:605.46px;width:26.00px;height:137.59px;background:#1f3864"></div>
<div class="t" style="left:905.00px;top:664.40px;width:200px;text-align:center;font-size:17px;line-height:19.72px;color:#fff;font-weight:400;-webkit-text-stroke-width:0.35px;transform:rotate(-90deg) scaleX(0.955);transform-origin:center center">Terminal Growth</div>
<div class="t" style="top:568.52px;font-size:17px;line-height:17px;color:#7c7c7c;font-weight:400;left:258.50px;width:900px;text-align:right;transform:scaleX(0.78);transform-origin:right center;-webkit-text-stroke-width:0.35px;">(30%)</div>
<div class="t" style="top:588.17px;font-size:17px;line-height:17px;color:#000;font-weight:400;left:258.50px;width:900px;text-align:right;transform:scaleX(0.78);transform-origin:right center;-webkit-text-stroke-width:0.35px;">3.5%</div>
<div class="t" style="top:568.52px;font-size:17px;line-height:17px;color:#7c7c7c;font-weight:400;left:310.60px;width:900px;text-align:right;transform:scaleX(0.78);transform-origin:right center;-webkit-text-stroke-width:0.35px;">(20%)</div>
<div class="t" style="top:588.17px;font-size:17px;line-height:17px;color:#000;font-weight:400;left:310.60px;width:900px;text-align:right;transform:scaleX(0.78);transform-origin:right center;-webkit-text-stroke-width:0.35px;">4.0%</div>
<div class="t" style="top:568.52px;font-size:17px;line-height:17px;color:#7c7c7c;font-weight:400;left:363.30px;width:900px;text-align:right;transform:scaleX(0.78);transform-origin:right center;-webkit-text-stroke-width:0.35px;">(10%)</div>
<div class="t" style="top:588.17px;font-size:17px;line-height:17px;color:#000;font-weight:400;left:363.30px;width:900px;text-align:right;transform:scaleX(0.78);transform-origin:right center;-webkit-text-stroke-width:0.35px;">4.5%</div>
<div class="t" style="top:568.52px;font-size:17px;line-height:17px;color:#7c7c7c;font-weight:400;left:415.40px;width:900px;text-align:right;transform:scaleX(0.78);transform-origin:right center;-webkit-text-stroke-width:0.35px;">0%</div>
<div class="t" style="top:588.17px;font-size:17px;line-height:17px;color:#000;font-weight:400;left:415.40px;width:900px;text-align:right;transform:scaleX(0.78);transform-origin:right center;-webkit-text-stroke-width:0.35px;">5.0%</div>
<div class="t" style="top:568.52px;font-size:17px;line-height:17px;color:#7c7c7c;font-weight:400;left:467.90px;width:900px;text-align:right;transform:scaleX(0.78);transform-origin:right center;-webkit-text-stroke-width:0.35px;">10%</div>
<div class="t" style="top:588.17px;font-size:17px;line-height:17px;color:#000;font-weight:400;left:467.90px;width:900px;text-align:right;transform:scaleX(0.78);transform-origin:right center;-webkit-text-stroke-width:0.35px;">5.5%</div>
<div class="t" style="top:568.52px;font-size:17px;line-height:17px;color:#7c7c7c;font-weight:400;left:520.20px;width:900px;text-align:right;transform:scaleX(0.78);transform-origin:right center;-webkit-text-stroke-width:0.35px;">20%</div>
<div class="t" style="top:588.17px;font-size:17px;line-height:17px;color:#000;font-weight:400;left:520.20px;width:900px;text-align:right;transform:scaleX(0.78);transform-origin:right center;-webkit-text-stroke-width:0.35px;">6.0%</div>
<div class="t" style="top:568.52px;font-size:17px;line-height:17px;color:#7c7c7c;font-weight:400;left:572.70px;width:900px;text-align:right;transform:scaleX(0.78);transform-origin:right center;-webkit-text-stroke-width:0.35px;">30%</div>
<div class="t" style="top:588.17px;font-size:17px;line-height:17px;color:#000;font-weight:400;left:572.70px;width:900px;text-align:right;transform:scaleX(0.78);transform-origin:right center;-webkit-text-stroke-width:0.35px;">6.5%</div>
<div class="t" style="top:607.83px;font-size:17px;line-height:17px;color:#7c7c7c;font-weight:400;left:163.00px;width:900px;text-align:right;transform:scaleX(0.78);transform-origin:right center;-webkit-text-stroke-width:0.35px;">(30%)</div>
<div class="t" style="top:607.83px;font-size:17px;line-height:17px;color:#000;font-weight:400;left:206.00px;width:900px;text-align:right;transform:scaleX(0.78);transform-origin:right center;-webkit-text-stroke-width:0.35px;">1.4%</div>
<div style="left:1110.00px;top:605.46px;width:53.00px;height:20.06px;background:#bfbfbf"></div>
<div class="t" style="top:607.83px;font-size:17px;line-height:17px;color:#000;font-weight:400;left:258.50px;width:900px;text-align:right;transform:scaleX(0.78);transform-origin:right center;-webkit-text-stroke-width:0.35px;">199</div>
<div style="left:1162.00px;top:605.46px;width:53.00px;height:20.06px;background:#c6c6c6"></div>
<div class="t" style="top:607.83px;font-size:17px;line-height:17px;color:#000;font-weight:400;left:310.60px;width:900px;text-align:right;transform:scaleX(0.78);transform-origin:right center;-webkit-text-stroke-width:0.35px;">202</div>
<div style="left:1214.00px;top:605.46px;width:54.00px;height:20.06px;background:#cdcdcd"></div>
<div class="t" style="top:607.83px;font-size:17px;line-height:17px;color:#000;font-weight:400;left:363.30px;width:900px;text-align:right;transform:scaleX(0.78);transform-origin:right center;-webkit-text-stroke-width:0.35px;">205</div>
<div style="left:1267.00px;top:605.46px;width:53.00px;height:20.06px;background:#d4d4d4"></div>
<div class="t" style="top:607.83px;font-size:17px;line-height:17px;color:#000;font-weight:400;left:415.40px;width:900px;text-align:right;transform:scaleX(0.78);transform-origin:right center;-webkit-text-stroke-width:0.35px;">208</div>
<div style="left:1319.00px;top:605.46px;width:53.00px;height:20.06px;background:#dadada"></div>
<div class="t" style="top:607.83px;font-size:17px;line-height:17px;color:#000;font-weight:400;left:467.90px;width:900px;text-align:right;transform:scaleX(0.78);transform-origin:right center;-webkit-text-stroke-width:0.35px;">211</div>
<div style="left:1371.00px;top:605.46px;width:54.00px;height:20.06px;background:#dfdfdf"></div>
<div class="t" style="top:607.83px;font-size:17px;line-height:17px;color:#000;font-weight:400;left:520.20px;width:900px;text-align:right;transform:scaleX(0.78);transform-origin:right center;-webkit-text-stroke-width:0.35px;">213</div>
<div style="left:1424.00px;top:605.46px;width:53.00px;height:20.06px;background:#e6e6e6"></div>
<div class="t" style="top:607.83px;font-size:17px;line-height:17px;color:#000;font-weight:400;left:572.70px;width:900px;text-align:right;transform:scaleX(0.78);transform-origin:right center;-webkit-text-stroke-width:0.35px;">216</div>
<div class="t" style="top:627.49px;font-size:17px;line-height:17px;color:#7c7c7c;font-weight:400;left:163.00px;width:900px;text-align:right;transform:scaleX(0.78);transform-origin:right center;-webkit-text-stroke-width:0.35px;">(20%)</div>
<div class="t" style="top:627.49px;font-size:17px;line-height:17px;color:#000;font-weight:400;left:206.00px;width:900px;text-align:right;transform:scaleX(0.78);transform-origin:right center;-webkit-text-stroke-width:0.35px;">1.6%</div>
<div style="left:1110.00px;top:625.12px;width:53.00px;height:20.06px;background:#cacaca"></div>
<div class="t" style="top:627.49px;font-size:17px;line-height:17px;color:#000;font-weight:400;left:258.50px;width:900px;text-align:right;transform:scaleX(0.78);transform-origin:right center;-webkit-text-stroke-width:0.35px;">204</div>
<div style="left:1162.00px;top:625.12px;width:53.00px;height:20.06px;background:#d1d1d1"></div>
<div class="t" style="top:627.49px;font-size:17px;line-height:17px;color:#000;font-weight:400;left:310.60px;width:900px;text-align:right;transform:scaleX(0.78);transform-origin:right center;-webkit-text-stroke-width:0.35px;">207</div>
<div style="left:1214.00px;top:625.12px;width:54.00px;height:20.06px;background:#d8d8d8"></div>
<div class="t" style="top:627.49px;font-size:17px;line-height:17px;color:#000;font-weight:400;left:363.30px;width:900px;text-align:right;transform:scaleX(0.78);transform-origin:right center;-webkit-text-stroke-width:0.35px;">210</div>
<div style="left:1267.00px;top:625.12px;width:53.00px;height:20.06px;background:#dfdfdf"></div>
<div class="t" style="top:627.49px;font-size:17px;line-height:17px;color:#000;font-weight:400;left:415.40px;width:900px;text-align:right;transform:scaleX(0.78);transform-origin:right center;-webkit-text-stroke-width:0.35px;">213</div>
<div style="left:1319.00px;top:625.12px;width:53.00px;height:20.06px;background:#e6e6e6"></div>
<div class="t" style="top:627.49px;font-size:17px;line-height:17px;color:#000;font-weight:400;left:467.90px;width:900px;text-align:right;transform:scaleX(0.78);transform-origin:right center;-webkit-text-stroke-width:0.35px;">216</div>
<div style="left:1371.00px;top:625.12px;width:54.00px;height:20.06px;background:#ededed"></div>
<div class="t" style="top:627.49px;font-size:17px;line-height:17px;color:#000;font-weight:400;left:520.20px;width:900px;text-align:right;transform:scaleX(0.78);transform-origin:right center;-webkit-text-stroke-width:0.35px;">219</div>
<div style="left:1424.00px;top:625.12px;width:53.00px;height:20.06px;background:#f4f4f4"></div>
<div class="t" style="top:627.49px;font-size:17px;line-height:17px;color:#000;font-weight:400;left:572.70px;width:900px;text-align:right;transform:scaleX(0.78);transform-origin:right center;-webkit-text-stroke-width:0.35px;">222</div>
<div class="t" style="top:647.14px;font-size:17px;line-height:17px;color:#7c7c7c;font-weight:400;left:163.00px;width:900px;text-align:right;transform:scaleX(0.78);transform-origin:right center;-webkit-text-stroke-width:0.35px;">(10%)</div>
<div class="t" style="top:647.14px;font-size:17px;line-height:17px;color:#000;font-weight:400;left:206.00px;width:900px;text-align:right;transform:scaleX(0.78);transform-origin:right center;-webkit-text-stroke-width:0.35px;">1.8%</div>
<div style="left:1110.00px;top:644.78px;width:53.00px;height:20.06px;background:#d6d6d6"></div>
<div class="t" style="top:647.14px;font-size:17px;line-height:17px;color:#000;font-weight:400;left:258.50px;width:900px;text-align:right;transform:scaleX(0.78);transform-origin:right center;-webkit-text-stroke-width:0.35px;">209</div>
<div style="left:1162.00px;top:644.78px;width:53.00px;height:20.06px;background:#dddddd"></div>
<div class="t" style="top:647.14px;font-size:17px;line-height:17px;color:#000;font-weight:400;left:310.60px;width:900px;text-align:right;transform:scaleX(0.78);transform-origin:right center;-webkit-text-stroke-width:0.35px;">212</div>
<div style="left:1214.00px;top:644.78px;width:54.00px;height:20.06px;background:#e4e4e4"></div>
<div class="t" style="top:647.14px;font-size:17px;line-height:17px;color:#000;font-weight:400;left:363.30px;width:900px;text-align:right;transform:scaleX(0.78);transform-origin:right center;-webkit-text-stroke-width:0.35px;">215</div>
<div style="left:1267.00px;top:644.78px;width:53.00px;height:20.06px;background:#eaeaea"></div>
<div class="t" style="top:647.14px;font-size:17px;line-height:17px;color:#000;font-weight:400;left:415.40px;width:900px;text-align:right;transform:scaleX(0.78);transform-origin:right center;-webkit-text-stroke-width:0.35px;">218</div>
<div style="left:1319.00px;top:644.78px;width:53.00px;height:20.06px;background:#f1f1f1"></div>
<div class="t" style="top:647.14px;font-size:17px;line-height:17px;color:#000;font-weight:400;left:467.90px;width:900px;text-align:right;transform:scaleX(0.78);transform-origin:right center;-webkit-text-stroke-width:0.35px;">221</div>
<div style="left:1371.00px;top:644.78px;width:54.00px;height:20.06px;background:#f8f8f8"></div>
<div class="t" style="top:647.14px;font-size:17px;line-height:17px;color:#000;font-weight:400;left:520.20px;width:900px;text-align:right;transform:scaleX(0.78);transform-origin:right center;-webkit-text-stroke-width:0.35px;">224</div>
<div style="left:1424.00px;top:644.78px;width:53.00px;height:20.06px;background:#f9fbfe"></div>
<div class="t" style="top:647.14px;font-size:17px;line-height:17px;color:#000;font-weight:400;left:572.70px;width:900px;text-align:right;transform:scaleX(0.78);transform-origin:right center;-webkit-text-stroke-width:0.35px;">228</div>
<div class="t" style="top:666.80px;font-size:17px;line-height:17px;color:#7c7c7c;font-weight:400;left:163.00px;width:900px;text-align:right;transform:scaleX(0.78);transform-origin:right center;-webkit-text-stroke-width:0.35px;">0%</div>
<div class="t" style="top:666.80px;font-size:17px;line-height:17px;color:#000;font-weight:400;left:206.00px;width:900px;text-align:right;transform:scaleX(0.78);transform-origin:right center;-webkit-text-stroke-width:0.35px;">2.0%</div>
<div style="left:1110.00px;top:664.43px;width:53.00px;height:20.06px;background:#e4e4e4"></div>
<div class="t" style="top:666.80px;font-size:17px;line-height:17px;color:#000;font-weight:400;left:258.50px;width:900px;text-align:right;transform:scaleX(0.78);transform-origin:right center;-webkit-text-stroke-width:0.35px;">215</div>
<div style="left:1162.00px;top:664.43px;width:53.00px;height:20.06px;background:#eaeaea"></div>
<div class="t" style="top:666.80px;font-size:17px;line-height:17px;color:#000;font-weight:400;left:310.60px;width:900px;text-align:right;transform:scaleX(0.78);transform-origin:right center;-webkit-text-stroke-width:0.35px;">218</div>
<div style="left:1214.00px;top:664.43px;width:54.00px;height:20.06px;background:#f1f1f1"></div>
<div class="t" style="top:666.80px;font-size:17px;line-height:17px;color:#000;font-weight:400;left:363.30px;width:900px;text-align:right;transform:scaleX(0.78);transform-origin:right center;-webkit-text-stroke-width:0.35px;">221</div>
<div style="left:1267.00px;top:664.43px;width:53.00px;height:20.06px;background:#f8f8f8"></div>
<div class="t" style="top:666.80px;font-size:17px;line-height:17px;color:#000;font-weight:400;left:415.40px;width:900px;text-align:right;transform:scaleX(0.78);transform-origin:right center;-webkit-text-stroke-width:0.35px;">224</div>
<div style="left:1319.00px;top:664.43px;width:53.00px;height:20.06px;background:#ffffff"></div>
<div class="t" style="top:666.80px;font-size:17px;line-height:17px;color:#000;font-weight:400;left:467.90px;width:900px;text-align:right;transform:scaleX(0.78);transform-origin:right center;-webkit-text-stroke-width:0.35px;">227</div>
<div style="left:1371.00px;top:664.43px;width:54.00px;height:20.06px;background:#edf4fa"></div>
<div class="t" style="top:666.80px;font-size:17px;line-height:17px;color:#000;font-weight:400;left:520.20px;width:900px;text-align:right;transform:scaleX(0.78);transform-origin:right center;-webkit-text-stroke-width:0.35px;">230</div>
<div style="left:1424.00px;top:664.43px;width:53.00px;height:20.06px;background:#d6e6f4"></div>
<div class="t" style="top:666.80px;font-size:17px;line-height:17px;color:#000;font-weight:400;left:572.70px;width:900px;text-align:right;transform:scaleX(0.78);transform-origin:right center;-webkit-text-stroke-width:0.35px;">234</div>
<div class="t" style="top:686.45px;font-size:17px;line-height:17px;color:#7c7c7c;font-weight:400;left:163.00px;width:900px;text-align:right;transform:scaleX(0.78);transform-origin:right center;-webkit-text-stroke-width:0.35px;">10%</div>
<div class="t" style="top:686.45px;font-size:17px;line-height:17px;color:#000;font-weight:400;left:206.00px;width:900px;text-align:right;transform:scaleX(0.78);transform-origin:right center;-webkit-text-stroke-width:0.35px;">2.2%</div>
<div style="left:1110.00px;top:684.09px;width:53.00px;height:20.06px;background:#f1f1f1"></div>
<div class="t" style="top:686.45px;font-size:17px;line-height:17px;color:#000;font-weight:400;left:258.50px;width:900px;text-align:right;transform:scaleX(0.78);transform-origin:right center;-webkit-text-stroke-width:0.35px;">221</div>
<div style="left:1162.00px;top:684.09px;width:53.00px;height:20.06px;background:#f8f8f8"></div>
<div class="t" style="top:686.45px;font-size:17px;line-height:17px;color:#000;font-weight:400;left:310.60px;width:900px;text-align:right;transform:scaleX(0.78);transform-origin:right center;-webkit-text-stroke-width:0.35px;">224</div>
<div style="left:1214.00px;top:684.09px;width:54.00px;height:20.06px;background:#ffffff"></div>
<div class="t" style="top:686.45px;font-size:17px;line-height:17px;color:#000;font-weight:400;left:363.30px;width:900px;text-align:right;transform:scaleX(0.78);transform-origin:right center;-webkit-text-stroke-width:0.35px;">227</div>
<div style="left:1267.00px;top:684.09px;width:53.00px;height:20.06px;background:#edf4fa"></div>
<div class="t" style="top:686.45px;font-size:17px;line-height:17px;color:#000;font-weight:400;left:415.40px;width:900px;text-align:right;transform:scaleX(0.78);transform-origin:right center;-webkit-text-stroke-width:0.35px;">230</div>
<div style="left:1319.00px;top:684.09px;width:53.00px;height:20.06px;background:#d6e6f4"></div>
<div class="t" style="top:686.45px;font-size:17px;line-height:17px;color:#000;font-weight:400;left:467.90px;width:900px;text-align:right;transform:scaleX(0.78);transform-origin:right center;-webkit-text-stroke-width:0.35px;">234</div>
<div style="left:1371.00px;top:684.09px;width:54.00px;height:20.06px;background:#c4dbf0"></div>
<div class="t" style="top:686.45px;font-size:17px;line-height:17px;color:#000;font-weight:400;left:520.20px;width:900px;text-align:right;transform:scaleX(0.78);transform-origin:right center;-webkit-text-stroke-width:0.35px;">237</div>
<div style="left:1424.00px;top:684.09px;width:53.00px;height:20.06px;background:#b3d1ec"></div>
<div class="t" style="top:686.45px;font-size:17px;line-height:17px;color:#000;font-weight:400;left:572.70px;width:900px;text-align:right;transform:scaleX(0.78);transform-origin:right center;-webkit-text-stroke-width:0.35px;">240</div>
<div class="t" style="top:706.11px;font-size:17px;line-height:17px;color:#7c7c7c;font-weight:400;left:163.00px;width:900px;text-align:right;transform:scaleX(0.78);transform-origin:right center;-webkit-text-stroke-width:0.35px;">20%</div>
<div class="t" style="top:706.11px;font-size:17px;line-height:17px;color:#000;font-weight:400;left:206.00px;width:900px;text-align:right;transform:scaleX(0.78);transform-origin:right center;-webkit-text-stroke-width:0.35px;">2.4%</div>
<div style="left:1110.00px;top:703.74px;width:53.00px;height:20.06px;background:#ffffff"></div>
<div class="t" style="top:706.11px;font-size:17px;line-height:17px;color:#000;font-weight:400;left:258.50px;width:900px;text-align:right;transform:scaleX(0.78);transform-origin:right center;-webkit-text-stroke-width:0.35px;">227</div>
<div style="left:1162.00px;top:703.74px;width:53.00px;height:20.06px;background:#edf4fa"></div>
<div class="t" style="top:706.11px;font-size:17px;line-height:17px;color:#000;font-weight:400;left:310.60px;width:900px;text-align:right;transform:scaleX(0.78);transform-origin:right center;-webkit-text-stroke-width:0.35px;">230</div>
<div style="left:1214.00px;top:703.74px;width:54.00px;height:20.06px;background:#d6e6f4"></div>
<div class="t" style="top:706.11px;font-size:17px;line-height:17px;color:#000;font-weight:400;left:363.30px;width:900px;text-align:right;transform:scaleX(0.78);transform-origin:right center;-webkit-text-stroke-width:0.35px;">234</div>
<div style="left:1267.00px;top:703.74px;width:53.00px;height:20.06px;background:#c4dbf0"></div>
<div class="t" style="top:706.11px;font-size:17px;line-height:17px;color:#000;font-weight:400;left:415.40px;width:900px;text-align:right;transform:scaleX(0.78);transform-origin:right center;-webkit-text-stroke-width:0.35px;">237</div>
<div style="left:1319.00px;top:703.74px;width:53.00px;height:20.06px;background:#b3d1ec"></div>
<div class="t" style="top:706.11px;font-size:17px;line-height:17px;color:#000;font-weight:400;left:467.90px;width:900px;text-align:right;transform:scaleX(0.78);transform-origin:right center;-webkit-text-stroke-width:0.35px;">240</div>
<div style="left:1371.00px;top:703.74px;width:54.00px;height:20.06px;background:#9bc2e6"></div>
<div class="t" style="top:706.11px;font-size:17px;line-height:17px;color:#000;font-weight:400;left:520.20px;width:900px;text-align:right;transform:scaleX(0.78);transform-origin:right center;-webkit-text-stroke-width:0.35px;">244</div>
<div style="left:1424.00px;top:703.74px;width:53.00px;height:20.06px;background:#8ab8e1"></div>
<div class="t" style="top:706.11px;font-size:17px;line-height:17px;color:#000;font-weight:400;left:572.70px;width:900px;text-align:right;transform:scaleX(0.78);transform-origin:right center;-webkit-text-stroke-width:0.35px;">247</div>
<div class="t" style="top:725.77px;font-size:17px;line-height:17px;color:#7c7c7c;font-weight:400;left:163.00px;width:900px;text-align:right;transform:scaleX(0.78);transform-origin:right center;-webkit-text-stroke-width:0.35px;">30%</div>
<div class="t" style="top:725.77px;font-size:17px;line-height:17px;color:#000;font-weight:400;left:206.00px;width:900px;text-align:right;transform:scaleX(0.78);transform-origin:right center;-webkit-text-stroke-width:0.35px;">2.6%</div>
<div style="left:1110.00px;top:723.40px;width:53.00px;height:20.06px;background:#d6e6f4"></div>
<div class="t" style="top:725.77px;font-size:17px;line-height:17px;color:#000;font-weight:400;left:258.50px;width:900px;text-align:right;transform:scaleX(0.78);transform-origin:right center;-webkit-text-stroke-width:0.35px;">234</div>
<div style="left:1162.00px;top:723.40px;width:53.00px;height:20.06px;background:#c4dbf0"></div>
<div class="t" style="top:725.77px;font-size:17px;line-height:17px;color:#000;font-weight:400;left:310.60px;width:900px;text-align:right;transform:scaleX(0.78);transform-origin:right center;-webkit-text-stroke-width:0.35px;">237</div>
<div style="left:1214.00px;top:723.40px;width:54.00px;height:20.06px;background:#adcdea"></div>
<div class="t" style="top:725.77px;font-size:17px;line-height:17px;color:#000;font-weight:400;left:363.30px;width:900px;text-align:right;transform:scaleX(0.78);transform-origin:right center;-webkit-text-stroke-width:0.35px;">241</div>
<div style="left:1267.00px;top:723.40px;width:53.00px;height:20.06px;background:#9bc2e6"></div>
<div class="t" style="top:725.77px;font-size:17px;line-height:17px;color:#000;font-weight:400;left:415.40px;width:900px;text-align:right;transform:scaleX(0.78);transform-origin:right center;-webkit-text-stroke-width:0.35px;">244</div>
<div style="left:1319.00px;top:723.40px;width:53.00px;height:20.06px;background:#84b4e0"></div>
<div class="t" style="top:725.77px;font-size:17px;line-height:17px;color:#000;font-weight:400;left:467.90px;width:900px;text-align:right;transform:scaleX(0.78);transform-origin:right center;-webkit-text-stroke-width:0.35px;">248</div>
<div style="left:1371.00px;top:723.40px;width:54.00px;height:20.06px;background:#72a9db"></div>
<div class="t" style="top:725.77px;font-size:17px;line-height:17px;color:#000;font-weight:400;left:520.20px;width:900px;text-align:right;transform:scaleX(0.78);transform-origin:right center;-webkit-text-stroke-width:0.35px;">251</div>
<div style="left:1424.00px;top:723.40px;width:53.00px;height:20.06px;background:#5b9bd5"></div>
<div class="t" style="top:725.77px;font-size:17px;line-height:17px;color:#000;font-weight:400;left:572.70px;width:900px;text-align:right;transform:scaleX(0.78);transform-origin:right center;-webkit-text-stroke-width:0.35px;">255</div>
<div style="left:992.00px;top:604.66px;width:484.70px;height:1.30px;background:#a8a8a8"></div>
<div style="left:1109.40px;top:566.15px;width:1.20px;height:39.31px;background:#b8b8b8"></div>
<div style="left:1267.00px;top:663.93px;width:52.70px;height:20.46px;border:1.4px solid #8a8a8a;box-sizing:border-box"></div>
<div style="left:0.00px;top:881.00px;width:1566.70px;height:34.00px;background:#efefef"></div>
<div style="left:0.00px;top:880.80px;width:1566.70px;height:1.50px;background:#cfcfcf"></div>
<svg style="left:14px;top:891px" width="12" height="15" viewBox="0 0 12 15"><path d="M11 0.5v14L1 7.5z" fill="#5a5a5a"/></svg>
<svg style="left:45px;top:891px" width="12" height="15" viewBox="0 0 12 15"><path d="M1 0.5v14L11 7.5z" fill="#5a5a5a"/></svg>
<div style="left:75.50px;top:883.00px;width:1.20px;height:26.00px;background:#d2d2d2"></div>
<div style="left:179.00px;top:883.00px;width:1.20px;height:26.00px;background:#d2d2d2"></div>
<div style="left:338.50px;top:883.00px;width:1.20px;height:26.00px;background:#d2d2d2"></div>
<div style="left:511.80px;top:883.00px;width:1.20px;height:26.00px;background:#d2d2d2"></div>
<div style="left:664.40px;top:883.00px;width:1.20px;height:26.00px;background:#d2d2d2"></div>
<div style="left:828.40px;top:883.00px;width:1.20px;height:26.00px;background:#d2d2d2"></div>
<div style="left:994.50px;top:883.00px;width:1.20px;height:26.00px;background:#d2d2d2"></div>
<div style="left:1476.60px;top:883.00px;width:1.20px;height:26.00px;background:#d2d2d2"></div>
<div style="left:1526.70px;top:883.00px;width:1.20px;height:26.00px;background:#d2d2d2"></div>
<div class="t" style="top:891.16px;font-size:16px;line-height:16px;color:#808080;font-weight:400;left:-323.00px;width:900px;text-align:center;">DCF</div>
<div class="t" style="top:891.16px;font-size:16px;line-height:16px;color:#555;font-weight:400;left:-191.60px;width:900px;text-align:center;">f_Scenario_F5e</div>
<div class="t" style="top:891.16px;font-size:16px;line-height:16px;color:#555;font-weight:400;left:-25.50px;width:900px;text-align:center;">f_Sensitivity_C1x</div>
<div class="t" style="top:891.16px;font-size:16px;line-height:16px;color:#555;font-weight:400;left:137.70px;width:900px;text-align:center;">f_What If_C1m</div>
<div class="t" style="top:891.16px;font-size:16px;line-height:16px;color:#555;font-weight:400;left:296.30px;width:900px;text-align:center;">f_Optimize_U0q</div>
<div class="t" style="top:891.16px;font-size:16px;line-height:16px;color:#555;font-weight:400;left:461.60px;width:900px;text-align:center;">f_Optimize_K5m</div>
<div class="t" style="top:891.16px;font-size:16px;line-height:16px;color:#555;font-weight:400;left:623.20px;width:900px;text-align:center;">f_Optimize_K2t</div>
<div style="left:1153.70px;top:879.50px;width:177.00px;height:31.00px;background:#fff;border-radius:0 0 6px 6px;box-shadow:0 1px 1.5px rgba(0,0,0,.25)"></div>
<div class="t" style="top:891.16px;font-size:16px;line-height:16px;color:#107c41;font-weight:700;left:792.00px;width:900px;text-align:center;">f_Data Table_K1y</div>
<div class="t" style="left:1355.5px;top:890px;width:118px;height:20px;overflow:hidden;font-size:16px;line-height:16px;color:#555;white-space:nowrap;-webkit-mask-image:linear-gradient(90deg,#000 70%,transparent 100%)"><span style="position:relative;top:0.5px">f_Treemap_M4z</span></div>
<svg style="left:1494px;top:890px" width="16" height="16" viewBox="0 0 16 16"><path d="M8 1v14M1 8h14" stroke="#333" stroke-width="2.2"/></svg>
<div style="left:1566.70px;top:179.00px;width:353.30px;height:736.00px;background:#f9fafb"></div>
<div style="left:1566.40px;top:179.00px;width:1.30px;height:736.00px;background:#d6d6d6"></div>
<div style="left:1567.70px;top:179.00px;width:352.30px;height:34.70px;background:#ebebeb"></div>
<div class="t" style="top:187.05px;font-size:20.5px;line-height:20.5px;color:#1a1a1a;font-weight:400;left:1589.20px;">Fontics</div>
<svg style="left:1881px;top:187.5px" width="19" height="19" viewBox="0 0 19 19"><circle cx="9.5" cy="9.5" r="9.2" fill="#6e6e6e"/><path d="M5.8 5.8l7.4 7.4M13.2 5.8l-7.4 7.4" stroke="#fff" stroke-width="1.7"/></svg>
<div style="left:1568.50px;top:213.70px;width:359.50px;height:59.00px;background:#f7f8fa;border:1px solid #e3e8f0;border-top:none;border-radius:0 0 8px 8px;box-sizing:border-box"></div>
<svg style="left:1606px;top:231px" width="28" height="26" viewBox="0 0 28 26">
<circle cx="12" cy="8" r="6.3" fill="none" stroke="#223f8c" stroke-width="2"/>
<path d="M2.5 24.5c0-4.5 3-8 7.5-8.8" fill="none" stroke="#223f8c" stroke-width="2" stroke-linecap="round"/>
<path d="M14 23.5l1-4 8-8c1-1 2.5-1 3.3 0 .8.8.8 2.2 0 3l-8 8z" fill="none" stroke="#223f8c" stroke-width="2" stroke-linejoin="round"/>
</svg>
<svg style="left:1689.5px;top:230.5px" width="26" height="26" viewBox="0 0 26 26">
<circle cx="13" cy="13" r="11.3" fill="none" stroke="#223f8c" stroke-width="2"/>
<path d="M9.8 10.2c0-2 1.4-3.4 3.3-3.4s3.3 1.3 3.3 3c0 2.4-3.2 2.6-3.2 5" fill="none" stroke="#223f8c" stroke-width="2" stroke-linecap="round"/>
<circle cx="13.2" cy="18.6" r="1.2" fill="#223f8c"/>
</svg>
<svg style="left:1773px;top:230px" width="27" height="27" viewBox="0 0 27 27">
<path d="M3 2.5h4.5l2.5 6-3 2.2c1.6 3.6 4.6 6.6 8.2 8.2l2.2-3 6 2.5v4.5c0 1-1 2-2 2C11 24.5 2.5 16 2.5 4.5c0-1 .5-2 .5-2z" fill="none" stroke="#223f8c" stroke-width="2" stroke-linejoin="round"/>
</svg>
<svg style="left:1857px;top:230px" width="24" height="27" viewBox="0 0 24 27">
<path d="M12 1.5v11" stroke="#8b1a1a" stroke-width="2.2"/>
<path d="M6.5 6.5A9.5 9.5 0 1 0 17.5 6.5" fill="none" stroke="#8b1a1a" stroke-width="2.2"/>
</svg>
<div class="t" style="top:303.42px;font-size:19px;line-height:19px;color:#1a1a1a;font-weight:400;left:1589.20px;-webkit-text-stroke-width:0.45px;">Analysis</div>
<div class="t" style="top:303.42px;font-size:19px;line-height:19px;color:#5a7090;font-weight:400;left:1702.50px;-webkit-text-stroke-width:0.45px;">Assurance</div>
<div style="left:1578.00px;top:334.20px;width:332.70px;height:2.00px;background:#dfe5ef"></div>
<div style="left:1578.00px;top:333.30px;width:93.20px;height:3.00px;background:#223f8c"></div>
<div style="left:1578.70px;top:352.40px;width:331.90px;height:311.60px;background:#fff;border:1px solid #dde3ec;border-radius:6px;box-sizing:border-box"></div>
<div class="t" style="top:374.49px;font-size:19.5px;line-height:19.5px;color:#111;font-weight:400;letter-spacing:-0.1px;left:1601.40px;-webkit-text-stroke-width:0.45px;">Create module</div>
<div class="t" style="top:403.70px;font-size:16.3px;line-height:16.3px;color:#5b7191;font-weight:400;left:1601.40px;">Select a category, module, and item</div>
<div style="left:1682.60px;top:444.20px;width:205.20px;height:35.50px;background:#fff;border:1px solid #dbe2ec;border-radius:2px;box-sizing:border-box"></div>
<div class="t" style="top:454.03px;font-size:16.5px;line-height:16.5px;color:#111;font-weight:400;left:1601.40px;-webkit-text-stroke-width:0.2px;">Category</div>
<div class="t" style="top:454.46px;font-size:16px;line-height:16px;color:#111;font-weight:400;left:1699.60px;">Impact Analysis</div>
<svg style="left:1854px;top:457.7px" width="14" height="9" viewBox="0 0 14 9"><path d="M1 1.2l6 6 6-6" fill="none" stroke="#444" stroke-width="1.5"/></svg>
<div style="left:1682.60px;top:496.60px;width:205.20px;height:35.50px;background:#fff;border:1px solid #dbe2ec;border-radius:2px;box-sizing:border-box"></div>
<div class="t" style="top:506.43px;font-size:16.5px;line-height:16.5px;color:#111;font-weight:400;left:1601.40px;-webkit-text-stroke-width:0.2px;">Module</div>
<div class="t" style="top:506.86px;font-size:16px;line-height:16px;color:#111;font-weight:400;left:1699.60px;">Data Tables</div>
<svg style="left:1854px;top:510.1px" width="14" height="9" viewBox="0 0 14 9"><path d="M1 1.2l6 6 6-6" fill="none" stroke="#444" stroke-width="1.5"/></svg>
<div style="left:1682.60px;top:549.00px;width:205.20px;height:35.50px;background:#fff;border:1px solid #dbe2ec;border-radius:2px;box-sizing:border-box"></div>
<div class="t" style="top:558.83px;font-size:16.5px;line-height:16.5px;color:#111;font-weight:400;left:1601.40px;-webkit-text-stroke-width:0.2px;">Item</div>
<div class="t" style="top:559.26px;font-size:16px;line-height:16px;color:#111;font-weight:400;left:1699.60px;">Multiple</div>
<svg style="left:1854px;top:562.5px" width="14" height="9" viewBox="0 0 14 9"><path d="M1 1.2l6 6 6-6" fill="none" stroke="#444" stroke-width="1.5"/></svg>
<div style="left:1679.70px;top:606.60px;width:82.60px;height:35.80px;background:#fff;border:1px solid #dbe2ec;border-radius:4px;box-sizing:border-box"></div>
<div class="t" style="top:615.83px;font-size:16.5px;line-height:16.5px;color:#111;font-weight:400;left:1271.00px;width:900px;text-align:center;-webkit-text-stroke-width:0.55px;">Reset</div>
<div style="left:1783.90px;top:606.60px;width:104.80px;height:35.80px;background:#264289;border-radius:4px"></div>
<div class="t" style="top:615.83px;font-size:16.5px;line-height:16.5px;color:#fff;font-weight:400;left:1386.30px;width:900px;text-align:center;-webkit-text-stroke-width:0.55px;">Create</div>
<div style="left:1578.70px;top:678.60px;width:331.90px;height:193.60px;background:#fff;border:1px solid #dde3ec;border-radius:6px;box-sizing:border-box"></div>
<div class="t" style="top:701.19px;font-size:19.5px;line-height:19.5px;color:#111;font-weight:400;letter-spacing:-0.1px;left:1601.30px;-webkit-text-stroke-width:0.45px;">Evaluate results</div>
<div class="t" style="top:729.80px;font-size:16.3px;line-height:16.3px;color:#5b7191;font-weight:400;left:1601.30px;">Evaluate a Fontics module</div>
<div class="t" style="top:771.73px;font-size:16.5px;line-height:16.5px;color:#111;font-weight:400;left:1601.30px;-webkit-text-stroke-width:0.3px;">Status:</div>
<div class="t" style="top:772.16px;font-size:16px;line-height:16px;color:#5b7191;font-weight:400;left:1662.40px;">Completed in 7.7s.</div>
<div style="left:1679.70px;top:814.60px;width:82.60px;height:35.80px;background:#fff;border:1px solid #dbe2ec;border-radius:4px;box-sizing:border-box"></div>
<div class="t" style="top:823.83px;font-size:16.5px;line-height:16.5px;color:#111;font-weight:400;left:1271.00px;width:900px;text-align:center;-webkit-text-stroke-width:0.55px;">Reset</div>
<div style="left:1783.90px;top:814.60px;width:104.80px;height:35.80px;background:#264289;border-radius:4px"></div>
<div class="t" style="top:823.83px;font-size:16.5px;line-height:16.5px;color:#fff;font-weight:400;left:1386.30px;width:900px;text-align:center;-webkit-text-stroke-width:0.55px;">Evaluate</div>
</body></html>
